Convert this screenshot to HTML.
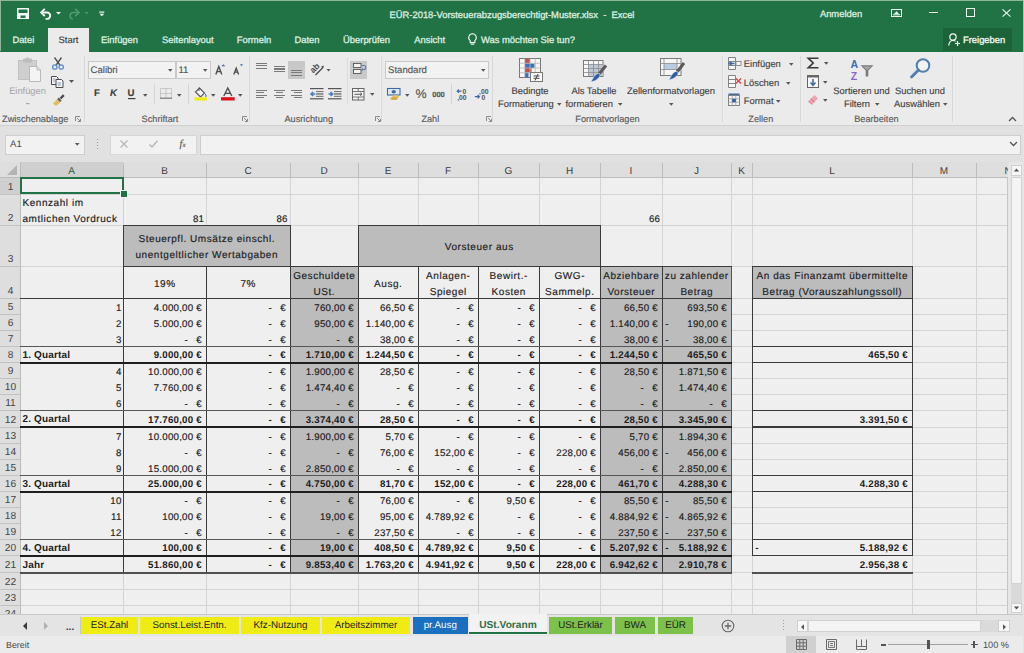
<!DOCTYPE html><html><head><meta charset="utf-8"><style>
*{margin:0;padding:0}
html,body{width:1024px;height:653px;overflow:hidden;background:#efefef}
body{position:relative;font-family:"Liberation Sans", sans-serif}
body>div{position:absolute}
.t{white-space:nowrap;overflow:visible;text-rendering:geometricPrecision}
.s{-webkit-text-stroke:0.16px currentColor}
.r{-webkit-text-stroke:0.15px currentColor}
</style></head><body><div style="left:0px;top:0px;width:1024px;height:51.5px;background:#217346;"></div>
<div style="left:0px;top:0px;width:1024px;height:1px;background:#8fb59a;"></div>
<div style="left:0px;top:0px;width:1px;height:51px;background:#8fb59a;"></div>
<div class="t" style="left:300.00px;top:8.55px;width:424.00px;height:11.28px;line-height:11.28px;font-size:9.4px;text-align:center;color:#dcefe0;-webkit-text-stroke:0.3px currentColor;">EÜR-2018-Vorsteuerabzugsberechtigt-Muster.xlsx&nbsp; - &nbsp;Excel</div>
<div class="t" style="left:812.00px;top:8.05px;width:58.00px;height:11.28px;line-height:11.28px;font-size:9.4px;text-align:center;color:#dcefe0;-webkit-text-stroke:0.3px currentColor;">Anmelden</div>
<div style="left:48px;top:28px;width:41px;height:24px;background:#ebebeb;"></div>
<div class="t r" style="left:48.00px;top:34.35px;width:41.00px;height:11.28px;line-height:11.28px;font-size:9.4px;text-align:center;color:#3a3a3a;">Start</div>
<div class="t" style="left:2.70px;top:34.35px;width:41.30px;height:11.28px;line-height:11.28px;font-size:9.4px;text-align:center;color:#dcefe0;-webkit-text-stroke:0.3px currentColor;">Datei</div>
<div class="t" style="left:91.00px;top:34.35px;width:57.00px;height:11.28px;line-height:11.28px;font-size:9.4px;text-align:center;color:#dcefe0;-webkit-text-stroke:0.3px currentColor;">Einfügen</div>
<div class="t" style="left:151.70px;top:34.35px;width:72.30px;height:11.28px;line-height:11.28px;font-size:9.4px;text-align:center;color:#dcefe0;-webkit-text-stroke:0.3px currentColor;">Seitenlayout</div>
<div class="t" style="left:227.00px;top:34.35px;width:54.00px;height:11.28px;line-height:11.28px;font-size:9.4px;text-align:center;color:#dcefe0;-webkit-text-stroke:0.3px currentColor;">Formeln</div>
<div class="t" style="left:285.00px;top:34.35px;width:44.00px;height:11.28px;line-height:11.28px;font-size:9.4px;text-align:center;color:#dcefe0;-webkit-text-stroke:0.3px currentColor;">Daten</div>
<div class="t" style="left:332.70px;top:34.35px;width:67.70px;height:11.28px;line-height:11.28px;font-size:9.4px;text-align:center;color:#dcefe0;-webkit-text-stroke:0.3px currentColor;">Überprüfen</div>
<div class="t" style="left:403.80px;top:34.35px;width:51.70px;height:11.28px;line-height:11.28px;font-size:9.4px;text-align:center;color:#dcefe0;-webkit-text-stroke:0.3px currentColor;">Ansicht</div>
<div class="t" style="left:481.00px;top:34.35px;width:119.00px;height:11.28px;line-height:11.28px;font-size:9.4px;text-align:left;color:#dcefe0;-webkit-text-stroke:0.3px currentColor;">Was möchten Sie tun?</div>
<div style="left:943px;top:28px;width:69px;height:23px;background:#1d6339;"></div>
<div class="t" style="left:963.00px;top:34.35px;width:47.00px;height:11.28px;line-height:11.28px;font-size:9.4px;text-align:left;color:#f4faf5;-webkit-text-stroke:0.3px currentColor;">Freigeben</div>
<div style="left:0px;top:51.5px;width:1024px;height:73.5px;background:#ebebeb;"></div>
<div style="left:84px;top:56px;width:1px;height:66px;background:#d8d8d8;"></div>
<div style="left:249px;top:56px;width:1px;height:66px;background:#d8d8d8;"></div>
<div style="left:381px;top:56px;width:1px;height:66px;background:#d8d8d8;"></div>
<div style="left:491.5px;top:56px;width:1px;height:66px;background:#d8d8d8;"></div>
<div style="left:722px;top:56px;width:1px;height:66px;background:#d8d8d8;"></div>
<div style="left:800px;top:56px;width:1px;height:66px;background:#d8d8d8;"></div>
<div style="left:952px;top:56px;width:1px;height:66px;background:#d8d8d8;"></div>
<div class="t r" style="left:-12.50px;top:113.74px;width:95.50px;height:11.04px;line-height:11.04px;font-size:9.2px;text-align:center;color:#5a5a5a;">Zwischenablage</div>
<div class="t r" style="left:126.00px;top:113.74px;width:68.00px;height:11.04px;line-height:11.04px;font-size:9.2px;text-align:center;color:#5a5a5a;">Schriftart</div>
<div class="t r" style="left:268.80px;top:113.74px;width:79.90px;height:11.04px;line-height:11.04px;font-size:9.2px;text-align:center;color:#5a5a5a;">Ausrichtung</div>
<div class="t r" style="left:406.70px;top:113.74px;width:47.30px;height:11.04px;line-height:11.04px;font-size:9.2px;text-align:center;color:#5a5a5a;">Zahl</div>
<div class="t r" style="left:560.50px;top:113.74px;width:94.00px;height:11.04px;line-height:11.04px;font-size:9.2px;text-align:center;color:#5a5a5a;">Formatvorlagen</div>
<div class="t r" style="left:733.70px;top:113.74px;width:54.30px;height:11.04px;line-height:11.04px;font-size:9.2px;text-align:center;color:#5a5a5a;">Zellen</div>
<div class="t r" style="left:839.90px;top:113.74px;width:73.10px;height:11.04px;line-height:11.04px;font-size:9.2px;text-align:center;color:#5a5a5a;">Bearbeiten</div>
<div style="left:0px;top:125px;width:1024px;height:37px;background:#e1e1e1;"></div>
<div style="left:0px;top:124.5px;width:1024px;height:1px;background:#d0d0d0;"></div>
<div style="left:4.5px;top:134.5px;width:80px;height:20px;background:#f2f2f2;border:1px solid #cdcdcd;box-sizing:border-box;"></div>
<div class="t" style="left:10.00px;top:139.37px;width:50.00px;height:11.52px;line-height:11.52px;font-size:9.6px;text-align:left;color:#4a4a4a;">A1</div>
<div style="left:109.5px;top:134.5px;width:87px;height:20px;background:#f2f2f2;border:1px solid #d6d6d6;box-sizing:border-box;"></div>
<div style="left:199.5px;top:134.5px;width:821px;height:20px;background:#f2f2f2;border:1px solid #cdcdcd;box-sizing:border-box;"></div>
<div style="left:0px;top:162px;width:1008px;height:452px;background:#efefef;"></div>
<div style="left:20px;top:162px;width:988px;height:15px;background:#dedede;"></div>
<div style="left:0px;top:162px;width:20px;height:452px;background:#dedede;"></div>
<div style="left:20px;top:162px;width:103px;height:15px;background:#cfcfcf;"></div>
<div style="left:0px;top:177px;width:20px;height:16.5px;background:#cfcfcf;"></div>
<div style="left:123px;top:177px;width:1px;height:437px;background:#d4d4d4;"></div>
<div style="left:123px;top:163px;width:1px;height:14px;background:#bdbdbd;"></div>
<div style="left:206px;top:177px;width:1px;height:437px;background:#d4d4d4;"></div>
<div style="left:206px;top:163px;width:1px;height:14px;background:#bdbdbd;"></div>
<div style="left:290px;top:177px;width:1px;height:437px;background:#d4d4d4;"></div>
<div style="left:290px;top:163px;width:1px;height:14px;background:#bdbdbd;"></div>
<div style="left:358px;top:177px;width:1px;height:437px;background:#d4d4d4;"></div>
<div style="left:358px;top:163px;width:1px;height:14px;background:#bdbdbd;"></div>
<div style="left:418px;top:177px;width:1px;height:437px;background:#d4d4d4;"></div>
<div style="left:418px;top:163px;width:1px;height:14px;background:#bdbdbd;"></div>
<div style="left:478px;top:177px;width:1px;height:437px;background:#d4d4d4;"></div>
<div style="left:478px;top:163px;width:1px;height:14px;background:#bdbdbd;"></div>
<div style="left:539px;top:177px;width:1px;height:437px;background:#d4d4d4;"></div>
<div style="left:539px;top:163px;width:1px;height:14px;background:#bdbdbd;"></div>
<div style="left:600px;top:177px;width:1px;height:437px;background:#d4d4d4;"></div>
<div style="left:600px;top:163px;width:1px;height:14px;background:#bdbdbd;"></div>
<div style="left:662px;top:177px;width:1px;height:437px;background:#d4d4d4;"></div>
<div style="left:662px;top:163px;width:1px;height:14px;background:#bdbdbd;"></div>
<div style="left:731px;top:177px;width:1px;height:437px;background:#d4d4d4;"></div>
<div style="left:731px;top:163px;width:1px;height:14px;background:#bdbdbd;"></div>
<div style="left:752px;top:177px;width:1px;height:437px;background:#d4d4d4;"></div>
<div style="left:752px;top:163px;width:1px;height:14px;background:#bdbdbd;"></div>
<div style="left:912px;top:177px;width:1px;height:437px;background:#d4d4d4;"></div>
<div style="left:912px;top:163px;width:1px;height:14px;background:#bdbdbd;"></div>
<div style="left:976px;top:177px;width:1px;height:437px;background:#d4d4d4;"></div>
<div style="left:976px;top:163px;width:1px;height:14px;background:#bdbdbd;"></div>
<div style="left:20px;top:193.5px;width:988px;height:1px;background:#d4d4d4;"></div>
<div style="left:0px;top:193.5px;width:20px;height:1px;background:#c2c2c2;"></div>
<div style="left:20px;top:225px;width:988px;height:1px;background:#d4d4d4;"></div>
<div style="left:0px;top:225px;width:20px;height:1px;background:#c2c2c2;"></div>
<div style="left:20px;top:266px;width:988px;height:1px;background:#d4d4d4;"></div>
<div style="left:0px;top:266px;width:20px;height:1px;background:#c2c2c2;"></div>
<div style="left:731px;top:298px;width:277px;height:1px;background:#d4d4d4;"></div>
<div style="left:0px;top:298px;width:20px;height:1px;background:#c2c2c2;"></div>
<div style="left:731px;top:314px;width:277px;height:1px;background:#d4d4d4;"></div>
<div style="left:0px;top:314px;width:20px;height:1px;background:#c2c2c2;"></div>
<div style="left:731px;top:330px;width:277px;height:1px;background:#d4d4d4;"></div>
<div style="left:0px;top:330px;width:20px;height:1px;background:#c2c2c2;"></div>
<div style="left:731px;top:346px;width:277px;height:1px;background:#d4d4d4;"></div>
<div style="left:0px;top:346px;width:20px;height:1px;background:#c2c2c2;"></div>
<div style="left:731px;top:362px;width:277px;height:1px;background:#d4d4d4;"></div>
<div style="left:0px;top:362px;width:20px;height:1px;background:#c2c2c2;"></div>
<div style="left:731px;top:378px;width:277px;height:1px;background:#d4d4d4;"></div>
<div style="left:0px;top:378px;width:20px;height:1px;background:#c2c2c2;"></div>
<div style="left:731px;top:394px;width:277px;height:1px;background:#d4d4d4;"></div>
<div style="left:0px;top:394px;width:20px;height:1px;background:#c2c2c2;"></div>
<div style="left:731px;top:410px;width:277px;height:1px;background:#d4d4d4;"></div>
<div style="left:0px;top:410px;width:20px;height:1px;background:#c2c2c2;"></div>
<div style="left:731px;top:426.5px;width:277px;height:1px;background:#d4d4d4;"></div>
<div style="left:0px;top:426.5px;width:20px;height:1px;background:#c2c2c2;"></div>
<div style="left:731px;top:443px;width:277px;height:1px;background:#d4d4d4;"></div>
<div style="left:0px;top:443px;width:20px;height:1px;background:#c2c2c2;"></div>
<div style="left:731px;top:459px;width:277px;height:1px;background:#d4d4d4;"></div>
<div style="left:0px;top:459px;width:20px;height:1px;background:#c2c2c2;"></div>
<div style="left:731px;top:475px;width:277px;height:1px;background:#d4d4d4;"></div>
<div style="left:0px;top:475px;width:20px;height:1px;background:#c2c2c2;"></div>
<div style="left:731px;top:491px;width:277px;height:1px;background:#d4d4d4;"></div>
<div style="left:0px;top:491px;width:20px;height:1px;background:#c2c2c2;"></div>
<div style="left:731px;top:507px;width:277px;height:1px;background:#d4d4d4;"></div>
<div style="left:0px;top:507px;width:20px;height:1px;background:#c2c2c2;"></div>
<div style="left:731px;top:523px;width:277px;height:1px;background:#d4d4d4;"></div>
<div style="left:0px;top:523px;width:20px;height:1px;background:#c2c2c2;"></div>
<div style="left:731px;top:539px;width:277px;height:1px;background:#d4d4d4;"></div>
<div style="left:0px;top:539px;width:20px;height:1px;background:#c2c2c2;"></div>
<div style="left:731px;top:555px;width:277px;height:1px;background:#d4d4d4;"></div>
<div style="left:0px;top:555px;width:20px;height:1px;background:#c2c2c2;"></div>
<div style="left:20px;top:572px;width:988px;height:1px;background:#d4d4d4;"></div>
<div style="left:0px;top:572px;width:20px;height:1px;background:#c2c2c2;"></div>
<div style="left:20px;top:589px;width:988px;height:1px;background:#d4d4d4;"></div>
<div style="left:0px;top:589px;width:20px;height:1px;background:#c2c2c2;"></div>
<div style="left:20px;top:605px;width:988px;height:1px;background:#d4d4d4;"></div>
<div style="left:0px;top:605px;width:20px;height:1px;background:#c2c2c2;"></div>
<div style="left:0px;top:177px;width:1008px;height:1px;background:#bcbcbc;"></div>
<div style="left:20px;top:162px;width:1px;height:452px;background:#bcbcbc;"></div>
<svg style="position:absolute;left:0;top:162px" width="20" height="15"><polygon points="17,3 17,13 7,13" fill="#b4b4b4"/></svg>
<div class="t" style="left:20.00px;top:165.69px;width:103.00px;height:12.0px;line-height:12.0px;font-size:10px;text-align:center;color:#2b5e3d;">A</div>
<div class="t" style="left:123.00px;top:165.69px;width:83.00px;height:12.0px;line-height:12.0px;font-size:10px;text-align:center;color:#3c3c3c;">B</div>
<div class="t" style="left:206.00px;top:165.69px;width:84.00px;height:12.0px;line-height:12.0px;font-size:10px;text-align:center;color:#3c3c3c;">C</div>
<div class="t" style="left:290.00px;top:165.69px;width:68.00px;height:12.0px;line-height:12.0px;font-size:10px;text-align:center;color:#3c3c3c;">D</div>
<div class="t" style="left:358.00px;top:165.69px;width:60.00px;height:12.0px;line-height:12.0px;font-size:10px;text-align:center;color:#3c3c3c;">E</div>
<div class="t" style="left:418.00px;top:165.69px;width:60.00px;height:12.0px;line-height:12.0px;font-size:10px;text-align:center;color:#3c3c3c;">F</div>
<div class="t" style="left:478.00px;top:165.69px;width:61.00px;height:12.0px;line-height:12.0px;font-size:10px;text-align:center;color:#3c3c3c;">G</div>
<div class="t" style="left:539.00px;top:165.69px;width:61.00px;height:12.0px;line-height:12.0px;font-size:10px;text-align:center;color:#3c3c3c;">H</div>
<div class="t" style="left:600.00px;top:165.69px;width:62.00px;height:12.0px;line-height:12.0px;font-size:10px;text-align:center;color:#3c3c3c;">I</div>
<div class="t" style="left:662.00px;top:165.69px;width:69.00px;height:12.0px;line-height:12.0px;font-size:10px;text-align:center;color:#3c3c3c;">J</div>
<div class="t" style="left:731.00px;top:165.69px;width:21.00px;height:12.0px;line-height:12.0px;font-size:10px;text-align:center;color:#3c3c3c;">K</div>
<div class="t" style="left:752.00px;top:165.69px;width:160.00px;height:12.0px;line-height:12.0px;font-size:10px;text-align:center;color:#3c3c3c;">L</div>
<div class="t" style="left:912.00px;top:165.69px;width:64.00px;height:12.0px;line-height:12.0px;font-size:10px;text-align:center;color:#3c3c3c;">M</div>
<div class="t" style="left:976.00px;top:165.69px;width:64.00px;height:12.0px;line-height:12.0px;font-size:10px;text-align:center;color:#3c3c3c;">N</div>
<div class="t" style="left:0.00px;top:181.61px;width:21.00px;height:12.24px;line-height:12.24px;font-size:10.2px;text-align:center;color:#444444;">1</div>
<div class="t" style="left:0.00px;top:213.11px;width:21.00px;height:12.24px;line-height:12.24px;font-size:10.2px;text-align:center;color:#444444;">2</div>
<div class="t" style="left:0.00px;top:254.11px;width:21.00px;height:12.24px;line-height:12.24px;font-size:10.2px;text-align:center;color:#444444;">3</div>
<div class="t" style="left:0.00px;top:286.11px;width:21.00px;height:12.24px;line-height:12.24px;font-size:10.2px;text-align:center;color:#444444;">4</div>
<div class="t" style="left:0.00px;top:302.11px;width:21.00px;height:12.24px;line-height:12.24px;font-size:10.2px;text-align:center;color:#444444;">5</div>
<div class="t" style="left:0.00px;top:318.11px;width:21.00px;height:12.24px;line-height:12.24px;font-size:10.2px;text-align:center;color:#444444;">6</div>
<div class="t" style="left:0.00px;top:334.11px;width:21.00px;height:12.24px;line-height:12.24px;font-size:10.2px;text-align:center;color:#444444;">7</div>
<div class="t" style="left:0.00px;top:350.11px;width:21.00px;height:12.24px;line-height:12.24px;font-size:10.2px;text-align:center;color:#444444;">8</div>
<div class="t" style="left:0.00px;top:366.11px;width:21.00px;height:12.24px;line-height:12.24px;font-size:10.2px;text-align:center;color:#444444;">9</div>
<div class="t" style="left:0.00px;top:382.11px;width:21.00px;height:12.24px;line-height:12.24px;font-size:10.2px;text-align:center;color:#444444;">10</div>
<div class="t" style="left:0.00px;top:398.11px;width:21.00px;height:12.24px;line-height:12.24px;font-size:10.2px;text-align:center;color:#444444;">11</div>
<div class="t" style="left:0.00px;top:414.61px;width:21.00px;height:12.24px;line-height:12.24px;font-size:10.2px;text-align:center;color:#444444;">12</div>
<div class="t" style="left:0.00px;top:431.11px;width:21.00px;height:12.24px;line-height:12.24px;font-size:10.2px;text-align:center;color:#444444;">13</div>
<div class="t" style="left:0.00px;top:447.11px;width:21.00px;height:12.24px;line-height:12.24px;font-size:10.2px;text-align:center;color:#444444;">14</div>
<div class="t" style="left:0.00px;top:463.11px;width:21.00px;height:12.24px;line-height:12.24px;font-size:10.2px;text-align:center;color:#444444;">15</div>
<div class="t" style="left:0.00px;top:479.11px;width:21.00px;height:12.24px;line-height:12.24px;font-size:10.2px;text-align:center;color:#444444;">16</div>
<div class="t" style="left:0.00px;top:495.11px;width:21.00px;height:12.24px;line-height:12.24px;font-size:10.2px;text-align:center;color:#444444;">17</div>
<div class="t" style="left:0.00px;top:511.11px;width:21.00px;height:12.24px;line-height:12.24px;font-size:10.2px;text-align:center;color:#444444;">18</div>
<div class="t" style="left:0.00px;top:527.11px;width:21.00px;height:12.24px;line-height:12.24px;font-size:10.2px;text-align:center;color:#444444;">19</div>
<div class="t" style="left:0.00px;top:543.11px;width:21.00px;height:12.24px;line-height:12.24px;font-size:10.2px;text-align:center;color:#444444;">20</div>
<div class="t" style="left:0.00px;top:560.11px;width:21.00px;height:12.24px;line-height:12.24px;font-size:10.2px;text-align:center;color:#444444;">21</div>
<div class="t" style="left:0.00px;top:577.11px;width:21.00px;height:12.24px;line-height:12.24px;font-size:10.2px;text-align:center;color:#444444;">22</div>
<div class="t" style="left:0.00px;top:593.11px;width:21.00px;height:12.24px;line-height:12.24px;font-size:10.2px;text-align:center;color:#444444;">23</div>
<div class="t" style="left:0.00px;top:609.11px;width:21.00px;height:12.24px;line-height:12.24px;font-size:10.2px;text-align:center;color:#444444;">24</div>
<div style="left:123px;top:225px;width:167px;height:41px;background:#bcbcbc;"></div>
<div style="left:358px;top:225px;width:242px;height:41px;background:#bcbcbc;"></div>
<div style="left:290px;top:266px;width:68px;height:306px;background:#bcbcbc;"></div>
<div style="left:600px;top:266px;width:131px;height:306px;background:#bcbcbc;"></div>
<div style="left:752px;top:266px;width:160px;height:32px;background:#bcbcbc;"></div>
<div style="left:291px;top:226px;width:67px;height:40px;background:#efefef;"></div>
<div style="left:123.0px;top:225px;width:1px;height:348px;background:#3a3a3a;"></div>
<div style="left:290.0px;top:225px;width:1px;height:348px;background:#3a3a3a;"></div>
<div style="left:358.0px;top:225px;width:1px;height:348px;background:#3a3a3a;"></div>
<div style="left:600.0px;top:225px;width:1px;height:348px;background:#3a3a3a;"></div>
<div style="left:206.0px;top:266px;width:1px;height:307px;background:#3a3a3a;"></div>
<div style="left:418.0px;top:266px;width:1px;height:307px;background:#3a3a3a;"></div>
<div style="left:478.0px;top:266px;width:1px;height:307px;background:#3a3a3a;"></div>
<div style="left:539.0px;top:266px;width:1px;height:307px;background:#3a3a3a;"></div>
<div style="left:662.0px;top:266px;width:1px;height:307px;background:#3a3a3a;"></div>
<div style="left:731.0px;top:266px;width:1px;height:307px;background:#555555;"></div>
<div style="left:752.0px;top:266px;width:1px;height:290px;background:#3a3a3a;"></div>
<div style="left:912.0px;top:266px;width:1px;height:290px;background:#3a3a3a;"></div>
<div style="left:123px;top:225.0px;width:168px;height:1px;background:#3a3a3a;"></div>
<div style="left:358px;top:225.0px;width:243px;height:1px;background:#3a3a3a;"></div>
<div style="left:123px;top:266.0px;width:609px;height:1px;background:#3a3a3a;"></div>
<div style="left:752px;top:266.0px;width:161px;height:1px;background:#3a3a3a;"></div>
<div style="left:20px;top:298.0px;width:712px;height:1px;background:#3a3a3a;"></div>
<div style="left:752px;top:298.0px;width:161px;height:1px;background:#3a3a3a;"></div>
<div style="left:20px;top:345.85px;width:712px;height:1.3px;background:#575757;"></div>
<div style="left:752px;top:346.0px;width:161px;height:1px;background:#3a3a3a;"></div>
<div style="left:20px;top:361.5px;width:712px;height:2px;background:#1e1e1e;"></div>
<div style="left:752px;top:361.9px;width:161px;height:1.2px;background:#3a3a3a;"></div>
<div style="left:20px;top:409.85px;width:712px;height:1.3px;background:#575757;"></div>
<div style="left:752px;top:410.0px;width:161px;height:1px;background:#3a3a3a;"></div>
<div style="left:20px;top:426.0px;width:712px;height:2px;background:#1e1e1e;"></div>
<div style="left:752px;top:426.4px;width:161px;height:1.2px;background:#3a3a3a;"></div>
<div style="left:20px;top:474.85px;width:712px;height:1.3px;background:#575757;"></div>
<div style="left:752px;top:475.0px;width:161px;height:1px;background:#3a3a3a;"></div>
<div style="left:20px;top:490.5px;width:712px;height:2px;background:#1e1e1e;"></div>
<div style="left:752px;top:490.9px;width:161px;height:1.2px;background:#3a3a3a;"></div>
<div style="left:20px;top:538.85px;width:712px;height:1.3px;background:#575757;"></div>
<div style="left:752px;top:539.0px;width:161px;height:1px;background:#3a3a3a;"></div>
<div style="left:20px;top:554.5px;width:712px;height:2px;background:#1e1e1e;"></div>
<div style="left:752px;top:554.9px;width:161px;height:1.2px;background:#3a3a3a;"></div>
<div style="left:20px;top:571.9px;width:712px;height:2.2px;background:#505050;"></div>
<div style="left:752px;top:571.9px;width:161px;height:2.2px;background:#505050;"></div>
<div style="left:19.5px;top:176.5px;width:104.5px;height:17.5px;background:transparent;border:2px solid #217346;box-sizing:border-box;"></div>
<div style="left:120.5px;top:190.5px;width:6px;height:6px;background:#217346;outline:1px solid #f4f4f4;"></div>
<div class="t s" style="left:22.50px;top:197.99px;width:117.50px;height:12.0px;line-height:12.0px;font-size:10.0px;text-align:left;color:#1c1c1c;letter-spacing:0.55px;">Kennzahl im</div>
<div class="t s" style="left:22.50px;top:213.59px;width:117.50px;height:12.0px;line-height:12.0px;font-size:10.0px;text-align:left;color:#1c1c1c;letter-spacing:0.55px;">amtlichen Vordruck</div>
<div class="t s" style="left:123.00px;top:214.17px;width:81.24px;height:11.64px;line-height:11.64px;font-size:9.7px;text-align:right;color:#1c1c1c;letter-spacing:0.24px;">81</div>
<div class="t s" style="left:206.00px;top:214.17px;width:81.74px;height:11.64px;line-height:11.64px;font-size:9.7px;text-align:right;color:#1c1c1c;letter-spacing:0.24px;">86</div>
<div class="t s" style="left:600.00px;top:214.17px;width:60.24px;height:11.64px;line-height:11.64px;font-size:9.7px;text-align:right;color:#1c1c1c;letter-spacing:0.24px;">66</div>
<div class="t s" style="left:123.28px;top:234.09px;width:167.00px;height:12.0px;line-height:12.0px;font-size:10.0px;text-align:center;color:#1c1c1c;letter-spacing:0.55px;">Steuerpfl. Umsätze einschl.</div>
<div class="t s" style="left:123.28px;top:250.00px;width:167.00px;height:12.0px;line-height:12.0px;font-size:10.0px;text-align:center;color:#1c1c1c;letter-spacing:0.55px;">unentgeltlicher Wertabgaben</div>
<div class="t s" style="left:358.27px;top:242.19px;width:242.00px;height:12.0px;line-height:12.0px;font-size:10.0px;text-align:center;color:#1c1c1c;letter-spacing:0.55px;">Vorsteuer aus</div>
<div class="t s" style="left:123.28px;top:279.00px;width:83.00px;height:12.0px;line-height:12.0px;font-size:10.0px;text-align:center;color:#1c1c1c;letter-spacing:0.55px;">19%</div>
<div class="t s" style="left:206.28px;top:279.00px;width:84.00px;height:12.0px;line-height:12.0px;font-size:10.0px;text-align:center;color:#1c1c1c;letter-spacing:0.55px;">7%</div>
<div class="t s" style="left:358.27px;top:279.00px;width:60.00px;height:12.0px;line-height:12.0px;font-size:10.0px;text-align:center;color:#1c1c1c;letter-spacing:0.55px;">Ausg.</div>
<div class="t s" style="left:280.27px;top:270.89px;width:88.00px;height:12.0px;line-height:12.0px;font-size:10.0px;text-align:center;color:#1c1c1c;letter-spacing:0.55px;">Geschuldete</div>
<div class="t s" style="left:280.27px;top:286.59px;width:88.00px;height:12.0px;line-height:12.0px;font-size:10.0px;text-align:center;color:#1c1c1c;letter-spacing:0.55px;">USt.</div>
<div class="t s" style="left:408.27px;top:270.89px;width:80.00px;height:12.0px;line-height:12.0px;font-size:10.0px;text-align:center;color:#1c1c1c;letter-spacing:0.55px;">Anlagen-</div>
<div class="t s" style="left:408.27px;top:286.59px;width:80.00px;height:12.0px;line-height:12.0px;font-size:10.0px;text-align:center;color:#1c1c1c;letter-spacing:0.55px;">Spiegel</div>
<div class="t s" style="left:468.27px;top:270.89px;width:81.00px;height:12.0px;line-height:12.0px;font-size:10.0px;text-align:center;color:#1c1c1c;letter-spacing:0.55px;">Bewirt.-</div>
<div class="t s" style="left:468.27px;top:286.59px;width:81.00px;height:12.0px;line-height:12.0px;font-size:10.0px;text-align:center;color:#1c1c1c;letter-spacing:0.55px;">Kosten</div>
<div class="t s" style="left:529.27px;top:270.89px;width:81.00px;height:12.0px;line-height:12.0px;font-size:10.0px;text-align:center;color:#1c1c1c;letter-spacing:0.55px;">GWG-</div>
<div class="t s" style="left:529.27px;top:286.59px;width:81.00px;height:12.0px;line-height:12.0px;font-size:10.0px;text-align:center;color:#1c1c1c;letter-spacing:0.55px;">Sammelp.</div>
<div class="t s" style="left:590.27px;top:270.89px;width:82.00px;height:12.0px;line-height:12.0px;font-size:10.0px;text-align:center;color:#1c1c1c;letter-spacing:0.55px;">Abziehbare</div>
<div class="t s" style="left:590.27px;top:286.59px;width:82.00px;height:12.0px;line-height:12.0px;font-size:10.0px;text-align:center;color:#1c1c1c;letter-spacing:0.55px;">Vorsteuer</div>
<div class="t s" style="left:652.27px;top:270.89px;width:89.00px;height:12.0px;line-height:12.0px;font-size:10.0px;text-align:center;color:#1c1c1c;letter-spacing:0.55px;">zu zahlender</div>
<div class="t s" style="left:652.27px;top:286.59px;width:89.00px;height:12.0px;line-height:12.0px;font-size:10.0px;text-align:center;color:#1c1c1c;letter-spacing:0.55px;">Betrag</div>
<div class="t s" style="left:742.27px;top:270.89px;width:180.00px;height:12.0px;line-height:12.0px;font-size:10.0px;text-align:center;color:#1c1c1c;letter-spacing:0.55px;">An das Finanzamt übermittelte</div>
<div class="t s" style="left:742.27px;top:286.59px;width:180.00px;height:12.0px;line-height:12.0px;font-size:10.0px;text-align:center;color:#1c1c1c;letter-spacing:0.55px;">Betrag (Vorauszahlungssoll)</div>
<div class="t s" style="left:20.00px;top:302.57px;width:101.54px;height:11.64px;line-height:11.64px;font-size:9.7px;text-align:right;color:#1c1c1c;letter-spacing:0.24px;">1</div>
<div class="t s" style="left:103.00px;top:302.57px;width:98.94px;height:11.64px;line-height:11.64px;font-size:9.7px;text-align:right;color:#1c1c1c;letter-spacing:0.24px;">4.000,00 €</div>
<div class="t s" style="left:260.00px;top:302.57px;width:25.70px;height:11.64px;line-height:11.64px;font-size:9.7px;text-align:right;color:#1c1c1c;">€</div>
<div class="t s" style="left:250.00px;top:302.57px;width:21.70px;height:11.64px;line-height:11.64px;font-size:9.7px;text-align:right;color:#1c1c1c;">-</div>
<div class="t s" style="left:270.00px;top:302.57px;width:83.94px;height:11.64px;line-height:11.64px;font-size:9.7px;text-align:right;color:#1c1c1c;letter-spacing:0.24px;">760,00 €</div>
<div class="t s" style="left:338.00px;top:302.57px;width:75.94px;height:11.64px;line-height:11.64px;font-size:9.7px;text-align:right;color:#1c1c1c;letter-spacing:0.24px;">66,50 €</div>
<div class="t s" style="left:448.00px;top:302.57px;width:25.70px;height:11.64px;line-height:11.64px;font-size:9.7px;text-align:right;color:#1c1c1c;">€</div>
<div class="t s" style="left:438.00px;top:302.57px;width:21.70px;height:11.64px;line-height:11.64px;font-size:9.7px;text-align:right;color:#1c1c1c;">-</div>
<div class="t s" style="left:509.00px;top:302.57px;width:25.70px;height:11.64px;line-height:11.64px;font-size:9.7px;text-align:right;color:#1c1c1c;">€</div>
<div class="t s" style="left:499.00px;top:302.57px;width:21.70px;height:11.64px;line-height:11.64px;font-size:9.7px;text-align:right;color:#1c1c1c;">-</div>
<div class="t s" style="left:570.00px;top:302.57px;width:25.70px;height:11.64px;line-height:11.64px;font-size:9.7px;text-align:right;color:#1c1c1c;">€</div>
<div class="t s" style="left:560.00px;top:302.57px;width:21.70px;height:11.64px;line-height:11.64px;font-size:9.7px;text-align:right;color:#1c1c1c;">-</div>
<div class="t s" style="left:580.00px;top:302.57px;width:77.94px;height:11.64px;line-height:11.64px;font-size:9.7px;text-align:right;color:#1c1c1c;letter-spacing:0.24px;">66,50 €</div>
<div class="t s" style="left:642.00px;top:302.57px;width:84.94px;height:11.64px;line-height:11.64px;font-size:9.7px;text-align:right;color:#1c1c1c;letter-spacing:0.24px;">693,50 €</div>
<div class="t s" style="left:20.00px;top:318.57px;width:101.54px;height:11.64px;line-height:11.64px;font-size:9.7px;text-align:right;color:#1c1c1c;letter-spacing:0.24px;">2</div>
<div class="t s" style="left:103.00px;top:318.57px;width:98.94px;height:11.64px;line-height:11.64px;font-size:9.7px;text-align:right;color:#1c1c1c;letter-spacing:0.24px;">5.000,00 €</div>
<div class="t s" style="left:260.00px;top:318.57px;width:25.70px;height:11.64px;line-height:11.64px;font-size:9.7px;text-align:right;color:#1c1c1c;">€</div>
<div class="t s" style="left:250.00px;top:318.57px;width:21.70px;height:11.64px;line-height:11.64px;font-size:9.7px;text-align:right;color:#1c1c1c;">-</div>
<div class="t s" style="left:270.00px;top:318.57px;width:83.94px;height:11.64px;line-height:11.64px;font-size:9.7px;text-align:right;color:#1c1c1c;letter-spacing:0.24px;">950,00 €</div>
<div class="t s" style="left:338.00px;top:318.57px;width:75.94px;height:11.64px;line-height:11.64px;font-size:9.7px;text-align:right;color:#1c1c1c;letter-spacing:0.24px;">1.140,00 €</div>
<div class="t s" style="left:448.00px;top:318.57px;width:25.70px;height:11.64px;line-height:11.64px;font-size:9.7px;text-align:right;color:#1c1c1c;">€</div>
<div class="t s" style="left:438.00px;top:318.57px;width:21.70px;height:11.64px;line-height:11.64px;font-size:9.7px;text-align:right;color:#1c1c1c;">-</div>
<div class="t s" style="left:509.00px;top:318.57px;width:25.70px;height:11.64px;line-height:11.64px;font-size:9.7px;text-align:right;color:#1c1c1c;">€</div>
<div class="t s" style="left:499.00px;top:318.57px;width:21.70px;height:11.64px;line-height:11.64px;font-size:9.7px;text-align:right;color:#1c1c1c;">-</div>
<div class="t s" style="left:570.00px;top:318.57px;width:25.70px;height:11.64px;line-height:11.64px;font-size:9.7px;text-align:right;color:#1c1c1c;">€</div>
<div class="t s" style="left:560.00px;top:318.57px;width:21.70px;height:11.64px;line-height:11.64px;font-size:9.7px;text-align:right;color:#1c1c1c;">-</div>
<div class="t s" style="left:580.00px;top:318.57px;width:77.94px;height:11.64px;line-height:11.64px;font-size:9.7px;text-align:right;color:#1c1c1c;letter-spacing:0.24px;">1.140,00 €</div>
<div class="t s" style="left:665.30px;top:318.57px;width:8.70px;height:11.64px;line-height:11.64px;font-size:9.7px;text-align:left;color:#1c1c1c;">-</div>
<div class="t s" style="left:642.00px;top:318.57px;width:84.94px;height:11.64px;line-height:11.64px;font-size:9.7px;text-align:right;color:#1c1c1c;letter-spacing:0.24px;">190,00 €</div>
<div class="t s" style="left:20.00px;top:334.57px;width:101.54px;height:11.64px;line-height:11.64px;font-size:9.7px;text-align:right;color:#1c1c1c;letter-spacing:0.24px;">3</div>
<div class="t s" style="left:176.00px;top:334.57px;width:25.70px;height:11.64px;line-height:11.64px;font-size:9.7px;text-align:right;color:#1c1c1c;">€</div>
<div class="t s" style="left:166.00px;top:334.57px;width:21.70px;height:11.64px;line-height:11.64px;font-size:9.7px;text-align:right;color:#1c1c1c;">-</div>
<div class="t s" style="left:260.00px;top:334.57px;width:25.70px;height:11.64px;line-height:11.64px;font-size:9.7px;text-align:right;color:#1c1c1c;">€</div>
<div class="t s" style="left:250.00px;top:334.57px;width:21.70px;height:11.64px;line-height:11.64px;font-size:9.7px;text-align:right;color:#1c1c1c;">-</div>
<div class="t s" style="left:328.00px;top:334.57px;width:25.70px;height:11.64px;line-height:11.64px;font-size:9.7px;text-align:right;color:#1c1c1c;">€</div>
<div class="t s" style="left:318.00px;top:334.57px;width:21.70px;height:11.64px;line-height:11.64px;font-size:9.7px;text-align:right;color:#1c1c1c;">-</div>
<div class="t s" style="left:338.00px;top:334.57px;width:75.94px;height:11.64px;line-height:11.64px;font-size:9.7px;text-align:right;color:#1c1c1c;letter-spacing:0.24px;">38,00 €</div>
<div class="t s" style="left:448.00px;top:334.57px;width:25.70px;height:11.64px;line-height:11.64px;font-size:9.7px;text-align:right;color:#1c1c1c;">€</div>
<div class="t s" style="left:438.00px;top:334.57px;width:21.70px;height:11.64px;line-height:11.64px;font-size:9.7px;text-align:right;color:#1c1c1c;">-</div>
<div class="t s" style="left:509.00px;top:334.57px;width:25.70px;height:11.64px;line-height:11.64px;font-size:9.7px;text-align:right;color:#1c1c1c;">€</div>
<div class="t s" style="left:499.00px;top:334.57px;width:21.70px;height:11.64px;line-height:11.64px;font-size:9.7px;text-align:right;color:#1c1c1c;">-</div>
<div class="t s" style="left:570.00px;top:334.57px;width:25.70px;height:11.64px;line-height:11.64px;font-size:9.7px;text-align:right;color:#1c1c1c;">€</div>
<div class="t s" style="left:560.00px;top:334.57px;width:21.70px;height:11.64px;line-height:11.64px;font-size:9.7px;text-align:right;color:#1c1c1c;">-</div>
<div class="t s" style="left:580.00px;top:334.57px;width:77.94px;height:11.64px;line-height:11.64px;font-size:9.7px;text-align:right;color:#1c1c1c;letter-spacing:0.24px;">38,00 €</div>
<div class="t s" style="left:665.30px;top:334.57px;width:8.70px;height:11.64px;line-height:11.64px;font-size:9.7px;text-align:left;color:#1c1c1c;">-</div>
<div class="t s" style="left:642.00px;top:334.57px;width:84.94px;height:11.64px;line-height:11.64px;font-size:9.7px;text-align:right;color:#1c1c1c;letter-spacing:0.24px;">38,00 €</div>
<div class="t" style="left:22.50px;top:349.79px;width:117.50px;height:12.0px;line-height:12.0px;font-size:10.0px;text-align:left;color:#1c1c1c;font-weight:bold;letter-spacing:0.15px;">1. Quartal</div>
<div class="t" style="left:103.00px;top:350.07px;width:98.94px;height:11.64px;line-height:11.64px;font-size:9.7px;text-align:right;color:#1c1c1c;font-weight:bold;letter-spacing:0.24px;">9.000,00 €</div>
<div class="t" style="left:260.00px;top:350.07px;width:25.70px;height:11.64px;line-height:11.64px;font-size:9.7px;text-align:right;color:#1c1c1c;font-weight:bold;">€</div>
<div class="t" style="left:250.00px;top:350.07px;width:21.70px;height:11.64px;line-height:11.64px;font-size:9.7px;text-align:right;color:#1c1c1c;font-weight:bold;">-</div>
<div class="t" style="left:270.00px;top:350.07px;width:83.94px;height:11.64px;line-height:11.64px;font-size:9.7px;text-align:right;color:#1c1c1c;font-weight:bold;letter-spacing:0.24px;">1.710,00 €</div>
<div class="t" style="left:338.00px;top:350.07px;width:75.94px;height:11.64px;line-height:11.64px;font-size:9.7px;text-align:right;color:#1c1c1c;font-weight:bold;letter-spacing:0.24px;">1.244,50 €</div>
<div class="t" style="left:448.00px;top:350.07px;width:25.70px;height:11.64px;line-height:11.64px;font-size:9.7px;text-align:right;color:#1c1c1c;font-weight:bold;">€</div>
<div class="t" style="left:438.00px;top:350.07px;width:21.70px;height:11.64px;line-height:11.64px;font-size:9.7px;text-align:right;color:#1c1c1c;font-weight:bold;">-</div>
<div class="t" style="left:509.00px;top:350.07px;width:25.70px;height:11.64px;line-height:11.64px;font-size:9.7px;text-align:right;color:#1c1c1c;font-weight:bold;">€</div>
<div class="t" style="left:499.00px;top:350.07px;width:21.70px;height:11.64px;line-height:11.64px;font-size:9.7px;text-align:right;color:#1c1c1c;font-weight:bold;">-</div>
<div class="t" style="left:570.00px;top:350.07px;width:25.70px;height:11.64px;line-height:11.64px;font-size:9.7px;text-align:right;color:#1c1c1c;font-weight:bold;">€</div>
<div class="t" style="left:560.00px;top:350.07px;width:21.70px;height:11.64px;line-height:11.64px;font-size:9.7px;text-align:right;color:#1c1c1c;font-weight:bold;">-</div>
<div class="t" style="left:580.00px;top:350.07px;width:77.94px;height:11.64px;line-height:11.64px;font-size:9.7px;text-align:right;color:#1c1c1c;font-weight:bold;letter-spacing:0.24px;">1.244,50 €</div>
<div class="t" style="left:642.00px;top:350.07px;width:84.94px;height:11.64px;line-height:11.64px;font-size:9.7px;text-align:right;color:#1c1c1c;font-weight:bold;letter-spacing:0.24px;">465,50 €</div>
<div class="t" style="left:732.00px;top:350.07px;width:175.94px;height:11.64px;line-height:11.64px;font-size:9.7px;text-align:right;color:#1c1c1c;font-weight:bold;letter-spacing:0.24px;">465,50 €</div>
<div class="t s" style="left:20.00px;top:366.57px;width:101.54px;height:11.64px;line-height:11.64px;font-size:9.7px;text-align:right;color:#1c1c1c;letter-spacing:0.24px;">4</div>
<div class="t s" style="left:103.00px;top:366.57px;width:98.94px;height:11.64px;line-height:11.64px;font-size:9.7px;text-align:right;color:#1c1c1c;letter-spacing:0.24px;">10.000,00 €</div>
<div class="t s" style="left:260.00px;top:366.57px;width:25.70px;height:11.64px;line-height:11.64px;font-size:9.7px;text-align:right;color:#1c1c1c;">€</div>
<div class="t s" style="left:250.00px;top:366.57px;width:21.70px;height:11.64px;line-height:11.64px;font-size:9.7px;text-align:right;color:#1c1c1c;">-</div>
<div class="t s" style="left:270.00px;top:366.57px;width:83.94px;height:11.64px;line-height:11.64px;font-size:9.7px;text-align:right;color:#1c1c1c;letter-spacing:0.24px;">1.900,00 €</div>
<div class="t s" style="left:338.00px;top:366.57px;width:75.94px;height:11.64px;line-height:11.64px;font-size:9.7px;text-align:right;color:#1c1c1c;letter-spacing:0.24px;">28,50 €</div>
<div class="t s" style="left:448.00px;top:366.57px;width:25.70px;height:11.64px;line-height:11.64px;font-size:9.7px;text-align:right;color:#1c1c1c;">€</div>
<div class="t s" style="left:438.00px;top:366.57px;width:21.70px;height:11.64px;line-height:11.64px;font-size:9.7px;text-align:right;color:#1c1c1c;">-</div>
<div class="t s" style="left:509.00px;top:366.57px;width:25.70px;height:11.64px;line-height:11.64px;font-size:9.7px;text-align:right;color:#1c1c1c;">€</div>
<div class="t s" style="left:499.00px;top:366.57px;width:21.70px;height:11.64px;line-height:11.64px;font-size:9.7px;text-align:right;color:#1c1c1c;">-</div>
<div class="t s" style="left:570.00px;top:366.57px;width:25.70px;height:11.64px;line-height:11.64px;font-size:9.7px;text-align:right;color:#1c1c1c;">€</div>
<div class="t s" style="left:560.00px;top:366.57px;width:21.70px;height:11.64px;line-height:11.64px;font-size:9.7px;text-align:right;color:#1c1c1c;">-</div>
<div class="t s" style="left:580.00px;top:366.57px;width:77.94px;height:11.64px;line-height:11.64px;font-size:9.7px;text-align:right;color:#1c1c1c;letter-spacing:0.24px;">28,50 €</div>
<div class="t s" style="left:642.00px;top:366.57px;width:84.94px;height:11.64px;line-height:11.64px;font-size:9.7px;text-align:right;color:#1c1c1c;letter-spacing:0.24px;">1.871,50 €</div>
<div class="t s" style="left:20.00px;top:382.57px;width:101.54px;height:11.64px;line-height:11.64px;font-size:9.7px;text-align:right;color:#1c1c1c;letter-spacing:0.24px;">5</div>
<div class="t s" style="left:103.00px;top:382.57px;width:98.94px;height:11.64px;line-height:11.64px;font-size:9.7px;text-align:right;color:#1c1c1c;letter-spacing:0.24px;">7.760,00 €</div>
<div class="t s" style="left:260.00px;top:382.57px;width:25.70px;height:11.64px;line-height:11.64px;font-size:9.7px;text-align:right;color:#1c1c1c;">€</div>
<div class="t s" style="left:250.00px;top:382.57px;width:21.70px;height:11.64px;line-height:11.64px;font-size:9.7px;text-align:right;color:#1c1c1c;">-</div>
<div class="t s" style="left:270.00px;top:382.57px;width:83.94px;height:11.64px;line-height:11.64px;font-size:9.7px;text-align:right;color:#1c1c1c;letter-spacing:0.24px;">1.474,40 €</div>
<div class="t s" style="left:388.00px;top:382.57px;width:25.70px;height:11.64px;line-height:11.64px;font-size:9.7px;text-align:right;color:#1c1c1c;">€</div>
<div class="t s" style="left:378.00px;top:382.57px;width:21.70px;height:11.64px;line-height:11.64px;font-size:9.7px;text-align:right;color:#1c1c1c;">-</div>
<div class="t s" style="left:448.00px;top:382.57px;width:25.70px;height:11.64px;line-height:11.64px;font-size:9.7px;text-align:right;color:#1c1c1c;">€</div>
<div class="t s" style="left:438.00px;top:382.57px;width:21.70px;height:11.64px;line-height:11.64px;font-size:9.7px;text-align:right;color:#1c1c1c;">-</div>
<div class="t s" style="left:509.00px;top:382.57px;width:25.70px;height:11.64px;line-height:11.64px;font-size:9.7px;text-align:right;color:#1c1c1c;">€</div>
<div class="t s" style="left:499.00px;top:382.57px;width:21.70px;height:11.64px;line-height:11.64px;font-size:9.7px;text-align:right;color:#1c1c1c;">-</div>
<div class="t s" style="left:570.00px;top:382.57px;width:25.70px;height:11.64px;line-height:11.64px;font-size:9.7px;text-align:right;color:#1c1c1c;">€</div>
<div class="t s" style="left:560.00px;top:382.57px;width:21.70px;height:11.64px;line-height:11.64px;font-size:9.7px;text-align:right;color:#1c1c1c;">-</div>
<div class="t s" style="left:632.00px;top:382.57px;width:25.70px;height:11.64px;line-height:11.64px;font-size:9.7px;text-align:right;color:#1c1c1c;">€</div>
<div class="t s" style="left:622.00px;top:382.57px;width:21.70px;height:11.64px;line-height:11.64px;font-size:9.7px;text-align:right;color:#1c1c1c;">-</div>
<div class="t s" style="left:642.00px;top:382.57px;width:84.94px;height:11.64px;line-height:11.64px;font-size:9.7px;text-align:right;color:#1c1c1c;letter-spacing:0.24px;">1.474,40 €</div>
<div class="t s" style="left:20.00px;top:398.57px;width:101.54px;height:11.64px;line-height:11.64px;font-size:9.7px;text-align:right;color:#1c1c1c;letter-spacing:0.24px;">6</div>
<div class="t s" style="left:176.00px;top:398.57px;width:25.70px;height:11.64px;line-height:11.64px;font-size:9.7px;text-align:right;color:#1c1c1c;">€</div>
<div class="t s" style="left:166.00px;top:398.57px;width:21.70px;height:11.64px;line-height:11.64px;font-size:9.7px;text-align:right;color:#1c1c1c;">-</div>
<div class="t s" style="left:260.00px;top:398.57px;width:25.70px;height:11.64px;line-height:11.64px;font-size:9.7px;text-align:right;color:#1c1c1c;">€</div>
<div class="t s" style="left:250.00px;top:398.57px;width:21.70px;height:11.64px;line-height:11.64px;font-size:9.7px;text-align:right;color:#1c1c1c;">-</div>
<div class="t s" style="left:328.00px;top:398.57px;width:25.70px;height:11.64px;line-height:11.64px;font-size:9.7px;text-align:right;color:#1c1c1c;">€</div>
<div class="t s" style="left:318.00px;top:398.57px;width:21.70px;height:11.64px;line-height:11.64px;font-size:9.7px;text-align:right;color:#1c1c1c;">-</div>
<div class="t s" style="left:388.00px;top:398.57px;width:25.70px;height:11.64px;line-height:11.64px;font-size:9.7px;text-align:right;color:#1c1c1c;">€</div>
<div class="t s" style="left:378.00px;top:398.57px;width:21.70px;height:11.64px;line-height:11.64px;font-size:9.7px;text-align:right;color:#1c1c1c;">-</div>
<div class="t s" style="left:448.00px;top:398.57px;width:25.70px;height:11.64px;line-height:11.64px;font-size:9.7px;text-align:right;color:#1c1c1c;">€</div>
<div class="t s" style="left:438.00px;top:398.57px;width:21.70px;height:11.64px;line-height:11.64px;font-size:9.7px;text-align:right;color:#1c1c1c;">-</div>
<div class="t s" style="left:509.00px;top:398.57px;width:25.70px;height:11.64px;line-height:11.64px;font-size:9.7px;text-align:right;color:#1c1c1c;">€</div>
<div class="t s" style="left:499.00px;top:398.57px;width:21.70px;height:11.64px;line-height:11.64px;font-size:9.7px;text-align:right;color:#1c1c1c;">-</div>
<div class="t s" style="left:570.00px;top:398.57px;width:25.70px;height:11.64px;line-height:11.64px;font-size:9.7px;text-align:right;color:#1c1c1c;">€</div>
<div class="t s" style="left:560.00px;top:398.57px;width:21.70px;height:11.64px;line-height:11.64px;font-size:9.7px;text-align:right;color:#1c1c1c;">-</div>
<div class="t s" style="left:632.00px;top:398.57px;width:25.70px;height:11.64px;line-height:11.64px;font-size:9.7px;text-align:right;color:#1c1c1c;">€</div>
<div class="t s" style="left:622.00px;top:398.57px;width:21.70px;height:11.64px;line-height:11.64px;font-size:9.7px;text-align:right;color:#1c1c1c;">-</div>
<div class="t s" style="left:701.00px;top:398.57px;width:25.70px;height:11.64px;line-height:11.64px;font-size:9.7px;text-align:right;color:#1c1c1c;">€</div>
<div class="t s" style="left:691.00px;top:398.57px;width:21.70px;height:11.64px;line-height:11.64px;font-size:9.7px;text-align:right;color:#1c1c1c;">-</div>
<div class="t" style="left:22.50px;top:414.29px;width:117.50px;height:12.0px;line-height:12.0px;font-size:10.0px;text-align:left;color:#1c1c1c;font-weight:bold;letter-spacing:0.15px;">2. Quartal</div>
<div class="t" style="left:103.00px;top:414.57px;width:98.94px;height:11.64px;line-height:11.64px;font-size:9.7px;text-align:right;color:#1c1c1c;font-weight:bold;letter-spacing:0.24px;">17.760,00 €</div>
<div class="t" style="left:260.00px;top:414.57px;width:25.70px;height:11.64px;line-height:11.64px;font-size:9.7px;text-align:right;color:#1c1c1c;font-weight:bold;">€</div>
<div class="t" style="left:250.00px;top:414.57px;width:21.70px;height:11.64px;line-height:11.64px;font-size:9.7px;text-align:right;color:#1c1c1c;font-weight:bold;">-</div>
<div class="t" style="left:270.00px;top:414.57px;width:83.94px;height:11.64px;line-height:11.64px;font-size:9.7px;text-align:right;color:#1c1c1c;font-weight:bold;letter-spacing:0.24px;">3.374,40 €</div>
<div class="t" style="left:338.00px;top:414.57px;width:75.94px;height:11.64px;line-height:11.64px;font-size:9.7px;text-align:right;color:#1c1c1c;font-weight:bold;letter-spacing:0.24px;">28,50 €</div>
<div class="t" style="left:448.00px;top:414.57px;width:25.70px;height:11.64px;line-height:11.64px;font-size:9.7px;text-align:right;color:#1c1c1c;font-weight:bold;">€</div>
<div class="t" style="left:438.00px;top:414.57px;width:21.70px;height:11.64px;line-height:11.64px;font-size:9.7px;text-align:right;color:#1c1c1c;font-weight:bold;">-</div>
<div class="t" style="left:509.00px;top:414.57px;width:25.70px;height:11.64px;line-height:11.64px;font-size:9.7px;text-align:right;color:#1c1c1c;font-weight:bold;">€</div>
<div class="t" style="left:499.00px;top:414.57px;width:21.70px;height:11.64px;line-height:11.64px;font-size:9.7px;text-align:right;color:#1c1c1c;font-weight:bold;">-</div>
<div class="t" style="left:570.00px;top:414.57px;width:25.70px;height:11.64px;line-height:11.64px;font-size:9.7px;text-align:right;color:#1c1c1c;font-weight:bold;">€</div>
<div class="t" style="left:560.00px;top:414.57px;width:21.70px;height:11.64px;line-height:11.64px;font-size:9.7px;text-align:right;color:#1c1c1c;font-weight:bold;">-</div>
<div class="t" style="left:580.00px;top:414.57px;width:77.94px;height:11.64px;line-height:11.64px;font-size:9.7px;text-align:right;color:#1c1c1c;font-weight:bold;letter-spacing:0.24px;">28,50 €</div>
<div class="t" style="left:642.00px;top:414.57px;width:84.94px;height:11.64px;line-height:11.64px;font-size:9.7px;text-align:right;color:#1c1c1c;font-weight:bold;letter-spacing:0.24px;">3.345,90 €</div>
<div class="t" style="left:732.00px;top:414.57px;width:175.94px;height:11.64px;line-height:11.64px;font-size:9.7px;text-align:right;color:#1c1c1c;font-weight:bold;letter-spacing:0.24px;">3.391,50 €</div>
<div class="t s" style="left:20.00px;top:431.57px;width:101.54px;height:11.64px;line-height:11.64px;font-size:9.7px;text-align:right;color:#1c1c1c;letter-spacing:0.24px;">7</div>
<div class="t s" style="left:103.00px;top:431.57px;width:98.94px;height:11.64px;line-height:11.64px;font-size:9.7px;text-align:right;color:#1c1c1c;letter-spacing:0.24px;">10.000,00 €</div>
<div class="t s" style="left:260.00px;top:431.57px;width:25.70px;height:11.64px;line-height:11.64px;font-size:9.7px;text-align:right;color:#1c1c1c;">€</div>
<div class="t s" style="left:250.00px;top:431.57px;width:21.70px;height:11.64px;line-height:11.64px;font-size:9.7px;text-align:right;color:#1c1c1c;">-</div>
<div class="t s" style="left:270.00px;top:431.57px;width:83.94px;height:11.64px;line-height:11.64px;font-size:9.7px;text-align:right;color:#1c1c1c;letter-spacing:0.24px;">1.900,00 €</div>
<div class="t s" style="left:338.00px;top:431.57px;width:75.94px;height:11.64px;line-height:11.64px;font-size:9.7px;text-align:right;color:#1c1c1c;letter-spacing:0.24px;">5,70 €</div>
<div class="t s" style="left:448.00px;top:431.57px;width:25.70px;height:11.64px;line-height:11.64px;font-size:9.7px;text-align:right;color:#1c1c1c;">€</div>
<div class="t s" style="left:438.00px;top:431.57px;width:21.70px;height:11.64px;line-height:11.64px;font-size:9.7px;text-align:right;color:#1c1c1c;">-</div>
<div class="t s" style="left:509.00px;top:431.57px;width:25.70px;height:11.64px;line-height:11.64px;font-size:9.7px;text-align:right;color:#1c1c1c;">€</div>
<div class="t s" style="left:499.00px;top:431.57px;width:21.70px;height:11.64px;line-height:11.64px;font-size:9.7px;text-align:right;color:#1c1c1c;">-</div>
<div class="t s" style="left:570.00px;top:431.57px;width:25.70px;height:11.64px;line-height:11.64px;font-size:9.7px;text-align:right;color:#1c1c1c;">€</div>
<div class="t s" style="left:560.00px;top:431.57px;width:21.70px;height:11.64px;line-height:11.64px;font-size:9.7px;text-align:right;color:#1c1c1c;">-</div>
<div class="t s" style="left:580.00px;top:431.57px;width:77.94px;height:11.64px;line-height:11.64px;font-size:9.7px;text-align:right;color:#1c1c1c;letter-spacing:0.24px;">5,70 €</div>
<div class="t s" style="left:642.00px;top:431.57px;width:84.94px;height:11.64px;line-height:11.64px;font-size:9.7px;text-align:right;color:#1c1c1c;letter-spacing:0.24px;">1.894,30 €</div>
<div class="t s" style="left:20.00px;top:447.57px;width:101.54px;height:11.64px;line-height:11.64px;font-size:9.7px;text-align:right;color:#1c1c1c;letter-spacing:0.24px;">8</div>
<div class="t s" style="left:176.00px;top:447.57px;width:25.70px;height:11.64px;line-height:11.64px;font-size:9.7px;text-align:right;color:#1c1c1c;">€</div>
<div class="t s" style="left:166.00px;top:447.57px;width:21.70px;height:11.64px;line-height:11.64px;font-size:9.7px;text-align:right;color:#1c1c1c;">-</div>
<div class="t s" style="left:260.00px;top:447.57px;width:25.70px;height:11.64px;line-height:11.64px;font-size:9.7px;text-align:right;color:#1c1c1c;">€</div>
<div class="t s" style="left:250.00px;top:447.57px;width:21.70px;height:11.64px;line-height:11.64px;font-size:9.7px;text-align:right;color:#1c1c1c;">-</div>
<div class="t s" style="left:328.00px;top:447.57px;width:25.70px;height:11.64px;line-height:11.64px;font-size:9.7px;text-align:right;color:#1c1c1c;">€</div>
<div class="t s" style="left:318.00px;top:447.57px;width:21.70px;height:11.64px;line-height:11.64px;font-size:9.7px;text-align:right;color:#1c1c1c;">-</div>
<div class="t s" style="left:338.00px;top:447.57px;width:75.94px;height:11.64px;line-height:11.64px;font-size:9.7px;text-align:right;color:#1c1c1c;letter-spacing:0.24px;">76,00 €</div>
<div class="t s" style="left:398.00px;top:447.57px;width:75.94px;height:11.64px;line-height:11.64px;font-size:9.7px;text-align:right;color:#1c1c1c;letter-spacing:0.24px;">152,00 €</div>
<div class="t s" style="left:509.00px;top:447.57px;width:25.70px;height:11.64px;line-height:11.64px;font-size:9.7px;text-align:right;color:#1c1c1c;">€</div>
<div class="t s" style="left:499.00px;top:447.57px;width:21.70px;height:11.64px;line-height:11.64px;font-size:9.7px;text-align:right;color:#1c1c1c;">-</div>
<div class="t s" style="left:519.00px;top:447.57px;width:76.94px;height:11.64px;line-height:11.64px;font-size:9.7px;text-align:right;color:#1c1c1c;letter-spacing:0.24px;">228,00 €</div>
<div class="t s" style="left:580.00px;top:447.57px;width:77.94px;height:11.64px;line-height:11.64px;font-size:9.7px;text-align:right;color:#1c1c1c;letter-spacing:0.24px;">456,00 €</div>
<div class="t s" style="left:665.30px;top:447.57px;width:8.70px;height:11.64px;line-height:11.64px;font-size:9.7px;text-align:left;color:#1c1c1c;">-</div>
<div class="t s" style="left:642.00px;top:447.57px;width:84.94px;height:11.64px;line-height:11.64px;font-size:9.7px;text-align:right;color:#1c1c1c;letter-spacing:0.24px;">456,00 €</div>
<div class="t s" style="left:20.00px;top:463.57px;width:101.54px;height:11.64px;line-height:11.64px;font-size:9.7px;text-align:right;color:#1c1c1c;letter-spacing:0.24px;">9</div>
<div class="t s" style="left:103.00px;top:463.57px;width:98.94px;height:11.64px;line-height:11.64px;font-size:9.7px;text-align:right;color:#1c1c1c;letter-spacing:0.24px;">15.000,00 €</div>
<div class="t s" style="left:260.00px;top:463.57px;width:25.70px;height:11.64px;line-height:11.64px;font-size:9.7px;text-align:right;color:#1c1c1c;">€</div>
<div class="t s" style="left:250.00px;top:463.57px;width:21.70px;height:11.64px;line-height:11.64px;font-size:9.7px;text-align:right;color:#1c1c1c;">-</div>
<div class="t s" style="left:270.00px;top:463.57px;width:83.94px;height:11.64px;line-height:11.64px;font-size:9.7px;text-align:right;color:#1c1c1c;letter-spacing:0.24px;">2.850,00 €</div>
<div class="t s" style="left:388.00px;top:463.57px;width:25.70px;height:11.64px;line-height:11.64px;font-size:9.7px;text-align:right;color:#1c1c1c;">€</div>
<div class="t s" style="left:378.00px;top:463.57px;width:21.70px;height:11.64px;line-height:11.64px;font-size:9.7px;text-align:right;color:#1c1c1c;">-</div>
<div class="t s" style="left:448.00px;top:463.57px;width:25.70px;height:11.64px;line-height:11.64px;font-size:9.7px;text-align:right;color:#1c1c1c;">€</div>
<div class="t s" style="left:438.00px;top:463.57px;width:21.70px;height:11.64px;line-height:11.64px;font-size:9.7px;text-align:right;color:#1c1c1c;">-</div>
<div class="t s" style="left:509.00px;top:463.57px;width:25.70px;height:11.64px;line-height:11.64px;font-size:9.7px;text-align:right;color:#1c1c1c;">€</div>
<div class="t s" style="left:499.00px;top:463.57px;width:21.70px;height:11.64px;line-height:11.64px;font-size:9.7px;text-align:right;color:#1c1c1c;">-</div>
<div class="t s" style="left:570.00px;top:463.57px;width:25.70px;height:11.64px;line-height:11.64px;font-size:9.7px;text-align:right;color:#1c1c1c;">€</div>
<div class="t s" style="left:560.00px;top:463.57px;width:21.70px;height:11.64px;line-height:11.64px;font-size:9.7px;text-align:right;color:#1c1c1c;">-</div>
<div class="t s" style="left:632.00px;top:463.57px;width:25.70px;height:11.64px;line-height:11.64px;font-size:9.7px;text-align:right;color:#1c1c1c;">€</div>
<div class="t s" style="left:622.00px;top:463.57px;width:21.70px;height:11.64px;line-height:11.64px;font-size:9.7px;text-align:right;color:#1c1c1c;">-</div>
<div class="t s" style="left:642.00px;top:463.57px;width:84.94px;height:11.64px;line-height:11.64px;font-size:9.7px;text-align:right;color:#1c1c1c;letter-spacing:0.24px;">2.850,00 €</div>
<div class="t" style="left:22.50px;top:478.79px;width:117.50px;height:12.0px;line-height:12.0px;font-size:10.0px;text-align:left;color:#1c1c1c;font-weight:bold;letter-spacing:0.15px;">3. Quartal</div>
<div class="t" style="left:103.00px;top:479.07px;width:98.94px;height:11.64px;line-height:11.64px;font-size:9.7px;text-align:right;color:#1c1c1c;font-weight:bold;letter-spacing:0.24px;">25.000,00 €</div>
<div class="t" style="left:260.00px;top:479.07px;width:25.70px;height:11.64px;line-height:11.64px;font-size:9.7px;text-align:right;color:#1c1c1c;font-weight:bold;">€</div>
<div class="t" style="left:250.00px;top:479.07px;width:21.70px;height:11.64px;line-height:11.64px;font-size:9.7px;text-align:right;color:#1c1c1c;font-weight:bold;">-</div>
<div class="t" style="left:270.00px;top:479.07px;width:83.94px;height:11.64px;line-height:11.64px;font-size:9.7px;text-align:right;color:#1c1c1c;font-weight:bold;letter-spacing:0.24px;">4.750,00 €</div>
<div class="t" style="left:338.00px;top:479.07px;width:75.94px;height:11.64px;line-height:11.64px;font-size:9.7px;text-align:right;color:#1c1c1c;font-weight:bold;letter-spacing:0.24px;">81,70 €</div>
<div class="t" style="left:398.00px;top:479.07px;width:75.94px;height:11.64px;line-height:11.64px;font-size:9.7px;text-align:right;color:#1c1c1c;font-weight:bold;letter-spacing:0.24px;">152,00 €</div>
<div class="t" style="left:509.00px;top:479.07px;width:25.70px;height:11.64px;line-height:11.64px;font-size:9.7px;text-align:right;color:#1c1c1c;font-weight:bold;">€</div>
<div class="t" style="left:499.00px;top:479.07px;width:21.70px;height:11.64px;line-height:11.64px;font-size:9.7px;text-align:right;color:#1c1c1c;font-weight:bold;">-</div>
<div class="t" style="left:519.00px;top:479.07px;width:76.94px;height:11.64px;line-height:11.64px;font-size:9.7px;text-align:right;color:#1c1c1c;font-weight:bold;letter-spacing:0.24px;">228,00 €</div>
<div class="t" style="left:580.00px;top:479.07px;width:77.94px;height:11.64px;line-height:11.64px;font-size:9.7px;text-align:right;color:#1c1c1c;font-weight:bold;letter-spacing:0.24px;">461,70 €</div>
<div class="t" style="left:642.00px;top:479.07px;width:84.94px;height:11.64px;line-height:11.64px;font-size:9.7px;text-align:right;color:#1c1c1c;font-weight:bold;letter-spacing:0.24px;">4.288,30 €</div>
<div class="t" style="left:732.00px;top:479.07px;width:175.94px;height:11.64px;line-height:11.64px;font-size:9.7px;text-align:right;color:#1c1c1c;font-weight:bold;letter-spacing:0.24px;">4.288,30 €</div>
<div class="t s" style="left:20.00px;top:495.57px;width:101.54px;height:11.64px;line-height:11.64px;font-size:9.7px;text-align:right;color:#1c1c1c;letter-spacing:0.24px;">10</div>
<div class="t s" style="left:176.00px;top:495.57px;width:25.70px;height:11.64px;line-height:11.64px;font-size:9.7px;text-align:right;color:#1c1c1c;">€</div>
<div class="t s" style="left:166.00px;top:495.57px;width:21.70px;height:11.64px;line-height:11.64px;font-size:9.7px;text-align:right;color:#1c1c1c;">-</div>
<div class="t s" style="left:260.00px;top:495.57px;width:25.70px;height:11.64px;line-height:11.64px;font-size:9.7px;text-align:right;color:#1c1c1c;">€</div>
<div class="t s" style="left:250.00px;top:495.57px;width:21.70px;height:11.64px;line-height:11.64px;font-size:9.7px;text-align:right;color:#1c1c1c;">-</div>
<div class="t s" style="left:328.00px;top:495.57px;width:25.70px;height:11.64px;line-height:11.64px;font-size:9.7px;text-align:right;color:#1c1c1c;">€</div>
<div class="t s" style="left:318.00px;top:495.57px;width:21.70px;height:11.64px;line-height:11.64px;font-size:9.7px;text-align:right;color:#1c1c1c;">-</div>
<div class="t s" style="left:338.00px;top:495.57px;width:75.94px;height:11.64px;line-height:11.64px;font-size:9.7px;text-align:right;color:#1c1c1c;letter-spacing:0.24px;">76,00 €</div>
<div class="t s" style="left:448.00px;top:495.57px;width:25.70px;height:11.64px;line-height:11.64px;font-size:9.7px;text-align:right;color:#1c1c1c;">€</div>
<div class="t s" style="left:438.00px;top:495.57px;width:21.70px;height:11.64px;line-height:11.64px;font-size:9.7px;text-align:right;color:#1c1c1c;">-</div>
<div class="t s" style="left:458.00px;top:495.57px;width:76.94px;height:11.64px;line-height:11.64px;font-size:9.7px;text-align:right;color:#1c1c1c;letter-spacing:0.24px;">9,50 €</div>
<div class="t s" style="left:570.00px;top:495.57px;width:25.70px;height:11.64px;line-height:11.64px;font-size:9.7px;text-align:right;color:#1c1c1c;">€</div>
<div class="t s" style="left:560.00px;top:495.57px;width:21.70px;height:11.64px;line-height:11.64px;font-size:9.7px;text-align:right;color:#1c1c1c;">-</div>
<div class="t s" style="left:580.00px;top:495.57px;width:77.94px;height:11.64px;line-height:11.64px;font-size:9.7px;text-align:right;color:#1c1c1c;letter-spacing:0.24px;">85,50 €</div>
<div class="t s" style="left:665.30px;top:495.57px;width:8.70px;height:11.64px;line-height:11.64px;font-size:9.7px;text-align:left;color:#1c1c1c;">-</div>
<div class="t s" style="left:642.00px;top:495.57px;width:84.94px;height:11.64px;line-height:11.64px;font-size:9.7px;text-align:right;color:#1c1c1c;letter-spacing:0.24px;">85,50 €</div>
<div class="t s" style="left:20.00px;top:511.57px;width:101.54px;height:11.64px;line-height:11.64px;font-size:9.7px;text-align:right;color:#1c1c1c;letter-spacing:0.24px;">11</div>
<div class="t s" style="left:103.00px;top:511.57px;width:98.94px;height:11.64px;line-height:11.64px;font-size:9.7px;text-align:right;color:#1c1c1c;letter-spacing:0.24px;">100,00 €</div>
<div class="t s" style="left:260.00px;top:511.57px;width:25.70px;height:11.64px;line-height:11.64px;font-size:9.7px;text-align:right;color:#1c1c1c;">€</div>
<div class="t s" style="left:250.00px;top:511.57px;width:21.70px;height:11.64px;line-height:11.64px;font-size:9.7px;text-align:right;color:#1c1c1c;">-</div>
<div class="t s" style="left:270.00px;top:511.57px;width:83.94px;height:11.64px;line-height:11.64px;font-size:9.7px;text-align:right;color:#1c1c1c;letter-spacing:0.24px;">19,00 €</div>
<div class="t s" style="left:338.00px;top:511.57px;width:75.94px;height:11.64px;line-height:11.64px;font-size:9.7px;text-align:right;color:#1c1c1c;letter-spacing:0.24px;">95,00 €</div>
<div class="t s" style="left:398.00px;top:511.57px;width:75.94px;height:11.64px;line-height:11.64px;font-size:9.7px;text-align:right;color:#1c1c1c;letter-spacing:0.24px;">4.789,92 €</div>
<div class="t s" style="left:509.00px;top:511.57px;width:25.70px;height:11.64px;line-height:11.64px;font-size:9.7px;text-align:right;color:#1c1c1c;">€</div>
<div class="t s" style="left:499.00px;top:511.57px;width:21.70px;height:11.64px;line-height:11.64px;font-size:9.7px;text-align:right;color:#1c1c1c;">-</div>
<div class="t s" style="left:570.00px;top:511.57px;width:25.70px;height:11.64px;line-height:11.64px;font-size:9.7px;text-align:right;color:#1c1c1c;">€</div>
<div class="t s" style="left:560.00px;top:511.57px;width:21.70px;height:11.64px;line-height:11.64px;font-size:9.7px;text-align:right;color:#1c1c1c;">-</div>
<div class="t s" style="left:580.00px;top:511.57px;width:77.94px;height:11.64px;line-height:11.64px;font-size:9.7px;text-align:right;color:#1c1c1c;letter-spacing:0.24px;">4.884,92 €</div>
<div class="t s" style="left:665.30px;top:511.57px;width:8.70px;height:11.64px;line-height:11.64px;font-size:9.7px;text-align:left;color:#1c1c1c;">-</div>
<div class="t s" style="left:642.00px;top:511.57px;width:84.94px;height:11.64px;line-height:11.64px;font-size:9.7px;text-align:right;color:#1c1c1c;letter-spacing:0.24px;">4.865,92 €</div>
<div class="t s" style="left:20.00px;top:527.57px;width:101.54px;height:11.64px;line-height:11.64px;font-size:9.7px;text-align:right;color:#1c1c1c;letter-spacing:0.24px;">12</div>
<div class="t s" style="left:176.00px;top:527.57px;width:25.70px;height:11.64px;line-height:11.64px;font-size:9.7px;text-align:right;color:#1c1c1c;">€</div>
<div class="t s" style="left:166.00px;top:527.57px;width:21.70px;height:11.64px;line-height:11.64px;font-size:9.7px;text-align:right;color:#1c1c1c;">-</div>
<div class="t s" style="left:260.00px;top:527.57px;width:25.70px;height:11.64px;line-height:11.64px;font-size:9.7px;text-align:right;color:#1c1c1c;">€</div>
<div class="t s" style="left:250.00px;top:527.57px;width:21.70px;height:11.64px;line-height:11.64px;font-size:9.7px;text-align:right;color:#1c1c1c;">-</div>
<div class="t s" style="left:328.00px;top:527.57px;width:25.70px;height:11.64px;line-height:11.64px;font-size:9.7px;text-align:right;color:#1c1c1c;">€</div>
<div class="t s" style="left:318.00px;top:527.57px;width:21.70px;height:11.64px;line-height:11.64px;font-size:9.7px;text-align:right;color:#1c1c1c;">-</div>
<div class="t s" style="left:338.00px;top:527.57px;width:75.94px;height:11.64px;line-height:11.64px;font-size:9.7px;text-align:right;color:#1c1c1c;letter-spacing:0.24px;">237,50 €</div>
<div class="t s" style="left:448.00px;top:527.57px;width:25.70px;height:11.64px;line-height:11.64px;font-size:9.7px;text-align:right;color:#1c1c1c;">€</div>
<div class="t s" style="left:438.00px;top:527.57px;width:21.70px;height:11.64px;line-height:11.64px;font-size:9.7px;text-align:right;color:#1c1c1c;">-</div>
<div class="t s" style="left:509.00px;top:527.57px;width:25.70px;height:11.64px;line-height:11.64px;font-size:9.7px;text-align:right;color:#1c1c1c;">€</div>
<div class="t s" style="left:499.00px;top:527.57px;width:21.70px;height:11.64px;line-height:11.64px;font-size:9.7px;text-align:right;color:#1c1c1c;">-</div>
<div class="t s" style="left:570.00px;top:527.57px;width:25.70px;height:11.64px;line-height:11.64px;font-size:9.7px;text-align:right;color:#1c1c1c;">€</div>
<div class="t s" style="left:560.00px;top:527.57px;width:21.70px;height:11.64px;line-height:11.64px;font-size:9.7px;text-align:right;color:#1c1c1c;">-</div>
<div class="t s" style="left:580.00px;top:527.57px;width:77.94px;height:11.64px;line-height:11.64px;font-size:9.7px;text-align:right;color:#1c1c1c;letter-spacing:0.24px;">237,50 €</div>
<div class="t s" style="left:665.30px;top:527.57px;width:8.70px;height:11.64px;line-height:11.64px;font-size:9.7px;text-align:left;color:#1c1c1c;">-</div>
<div class="t s" style="left:642.00px;top:527.57px;width:84.94px;height:11.64px;line-height:11.64px;font-size:9.7px;text-align:right;color:#1c1c1c;letter-spacing:0.24px;">237,50 €</div>
<div class="t" style="left:22.50px;top:542.80px;width:117.50px;height:12.0px;line-height:12.0px;font-size:10.0px;text-align:left;color:#1c1c1c;font-weight:bold;letter-spacing:0.15px;">4. Quartal</div>
<div class="t" style="left:103.00px;top:543.07px;width:98.94px;height:11.64px;line-height:11.64px;font-size:9.7px;text-align:right;color:#1c1c1c;font-weight:bold;letter-spacing:0.24px;">100,00 €</div>
<div class="t" style="left:260.00px;top:543.07px;width:25.70px;height:11.64px;line-height:11.64px;font-size:9.7px;text-align:right;color:#1c1c1c;font-weight:bold;">€</div>
<div class="t" style="left:250.00px;top:543.07px;width:21.70px;height:11.64px;line-height:11.64px;font-size:9.7px;text-align:right;color:#1c1c1c;font-weight:bold;">-</div>
<div class="t" style="left:270.00px;top:543.07px;width:83.94px;height:11.64px;line-height:11.64px;font-size:9.7px;text-align:right;color:#1c1c1c;font-weight:bold;letter-spacing:0.24px;">19,00 €</div>
<div class="t" style="left:338.00px;top:543.07px;width:75.94px;height:11.64px;line-height:11.64px;font-size:9.7px;text-align:right;color:#1c1c1c;font-weight:bold;letter-spacing:0.24px;">408,50 €</div>
<div class="t" style="left:398.00px;top:543.07px;width:75.94px;height:11.64px;line-height:11.64px;font-size:9.7px;text-align:right;color:#1c1c1c;font-weight:bold;letter-spacing:0.24px;">4.789,92 €</div>
<div class="t" style="left:458.00px;top:543.07px;width:76.94px;height:11.64px;line-height:11.64px;font-size:9.7px;text-align:right;color:#1c1c1c;font-weight:bold;letter-spacing:0.24px;">9,50 €</div>
<div class="t" style="left:570.00px;top:543.07px;width:25.70px;height:11.64px;line-height:11.64px;font-size:9.7px;text-align:right;color:#1c1c1c;font-weight:bold;">€</div>
<div class="t" style="left:560.00px;top:543.07px;width:21.70px;height:11.64px;line-height:11.64px;font-size:9.7px;text-align:right;color:#1c1c1c;font-weight:bold;">-</div>
<div class="t" style="left:580.00px;top:543.07px;width:77.94px;height:11.64px;line-height:11.64px;font-size:9.7px;text-align:right;color:#1c1c1c;font-weight:bold;letter-spacing:0.24px;">5.207,92 €</div>
<div class="t" style="left:665.30px;top:543.07px;width:8.70px;height:11.64px;line-height:11.64px;font-size:9.7px;text-align:left;color:#1c1c1c;font-weight:bold;">-</div>
<div class="t" style="left:642.00px;top:543.07px;width:84.94px;height:11.64px;line-height:11.64px;font-size:9.7px;text-align:right;color:#1c1c1c;font-weight:bold;letter-spacing:0.24px;">5.188,92 €</div>
<div class="t" style="left:755.30px;top:543.07px;width:8.70px;height:11.64px;line-height:11.64px;font-size:9.7px;text-align:left;color:#1c1c1c;font-weight:bold;">-</div>
<div class="t" style="left:732.00px;top:543.07px;width:175.94px;height:11.64px;line-height:11.64px;font-size:9.7px;text-align:right;color:#1c1c1c;font-weight:bold;letter-spacing:0.24px;">5.188,92 €</div>
<div class="t" style="left:22.50px;top:559.80px;width:117.50px;height:12.0px;line-height:12.0px;font-size:10.0px;text-align:left;color:#1c1c1c;font-weight:bold;letter-spacing:0.15px;">Jahr</div>
<div class="t" style="left:103.00px;top:560.07px;width:98.94px;height:11.64px;line-height:11.64px;font-size:9.7px;text-align:right;color:#1c1c1c;font-weight:bold;letter-spacing:0.24px;">51.860,00 €</div>
<div class="t" style="left:260.00px;top:560.07px;width:25.70px;height:11.64px;line-height:11.64px;font-size:9.7px;text-align:right;color:#1c1c1c;font-weight:bold;">€</div>
<div class="t" style="left:250.00px;top:560.07px;width:21.70px;height:11.64px;line-height:11.64px;font-size:9.7px;text-align:right;color:#1c1c1c;font-weight:bold;">-</div>
<div class="t" style="left:270.00px;top:560.07px;width:83.94px;height:11.64px;line-height:11.64px;font-size:9.7px;text-align:right;color:#1c1c1c;font-weight:bold;letter-spacing:0.24px;">9.853,40 €</div>
<div class="t" style="left:338.00px;top:560.07px;width:75.94px;height:11.64px;line-height:11.64px;font-size:9.7px;text-align:right;color:#1c1c1c;font-weight:bold;letter-spacing:0.24px;">1.763,20 €</div>
<div class="t" style="left:398.00px;top:560.07px;width:75.94px;height:11.64px;line-height:11.64px;font-size:9.7px;text-align:right;color:#1c1c1c;font-weight:bold;letter-spacing:0.24px;">4.941,92 €</div>
<div class="t" style="left:458.00px;top:560.07px;width:76.94px;height:11.64px;line-height:11.64px;font-size:9.7px;text-align:right;color:#1c1c1c;font-weight:bold;letter-spacing:0.24px;">9,50 €</div>
<div class="t" style="left:519.00px;top:560.07px;width:76.94px;height:11.64px;line-height:11.64px;font-size:9.7px;text-align:right;color:#1c1c1c;font-weight:bold;letter-spacing:0.24px;">228,00 €</div>
<div class="t" style="left:580.00px;top:560.07px;width:77.94px;height:11.64px;line-height:11.64px;font-size:9.7px;text-align:right;color:#1c1c1c;font-weight:bold;letter-spacing:0.24px;">6.942,62 €</div>
<div class="t" style="left:642.00px;top:560.07px;width:84.94px;height:11.64px;line-height:11.64px;font-size:9.7px;text-align:right;color:#1c1c1c;font-weight:bold;letter-spacing:0.24px;">2.910,78 €</div>
<div class="t" style="left:732.00px;top:560.07px;width:175.94px;height:11.64px;line-height:11.64px;font-size:9.7px;text-align:right;color:#1c1c1c;font-weight:bold;letter-spacing:0.24px;">2.956,38 €</div>
<div style="left:0px;top:614px;width:1024px;height:22px;background:#e4e4e4;"></div>
<div style="left:0px;top:614px;width:1024px;height:1px;background:#c8c8c8;"></div>
<div style="left:1008px;top:162px;width:16px;height:452px;background:#e6e6e6;"></div>
<div style="left:1007px;top:177px;width:1px;height:437px;background:#c6c6c6;"></div>
<div style="left:1010.5px;top:165px;width:11.5px;height:10.5px;background:#f7f7f7;border:1px solid #d0d0d0;box-sizing:border-box;"></div>
<div style="left:1010.5px;top:176.5px;width:11.5px;height:407px;background:#f4f4f4;border:1px solid #d2d2d2;box-sizing:border-box;"></div>
<div style="left:1010.5px;top:583.5px;width:11.5px;height:19px;background:#d9d9d9;"></div>
<div style="left:1011px;top:603px;width:10.5px;height:10px;background:#f7f7f7;border:1px solid #d0d0d0;box-sizing:border-box;"></div>
<svg style="position:absolute;left:1011px;top:165px" width="11" height="10"><polygon points="2.8,6.5 8.2,6.5 5.5,3.5" fill="#555"/></svg>
<svg style="position:absolute;left:1011px;top:603px" width="11" height="10"><polygon points="2.8,3.5 8.2,3.5 5.5,6.5" fill="#555"/></svg>
<svg style="position:absolute;left:20px;top:620px" width="10" height="12"><polygon points="7,2 7,10 3,6" fill="#3a3a3a"/></svg>
<svg style="position:absolute;left:41px;top:620px" width="10" height="12"><polygon points="3,2 3,10 7,6" fill="#b0b0b0"/></svg>
<div class="t" style="left:60.00px;top:621.90px;width:20.00px;height:12.0px;line-height:12.0px;font-size:10px;text-align:center;color:#333;font-weight:bold;">...</div>
<div style="left:80px;top:617px;width:1px;height:17px;background:#c8c8c8;"></div>
<div style="left:81px;top:616.5px;width:57px;height:17.5px;background:#efec14;"></div>
<div class="t" style="left:81.00px;top:620.08px;width:57.00px;height:11.76px;line-height:11.76px;font-size:9.8px;text-align:center;color:#222;">ESt.Zahl</div>
<div style="left:140px;top:616.5px;width:99px;height:17.5px;background:#efec14;"></div>
<div class="t" style="left:140.00px;top:620.08px;width:99.00px;height:11.76px;line-height:11.76px;font-size:9.8px;text-align:center;color:#222;">Sonst.Leist.Entn.</div>
<div style="left:241px;top:616.5px;width:79px;height:17.5px;background:#efec14;"></div>
<div class="t" style="left:241.00px;top:620.08px;width:79.00px;height:11.76px;line-height:11.76px;font-size:9.8px;text-align:center;color:#222;">Kfz-Nutzung</div>
<div style="left:322px;top:616.5px;width:88px;height:17.5px;background:#efec14;"></div>
<div class="t" style="left:322.00px;top:620.08px;width:88.00px;height:11.76px;line-height:11.76px;font-size:9.8px;text-align:center;color:#222;">Arbeitszimmer</div>
<div style="left:412.5px;top:616.5px;width:55.5px;height:17.5px;background:#1a6fbf;"></div>
<div class="t" style="left:412.50px;top:620.08px;width:55.50px;height:11.76px;line-height:11.76px;font-size:9.8px;text-align:center;color:#ffffff;">pr.Ausg</div>
<div style="left:549px;top:616.5px;width:63px;height:17.5px;background:#7cc14a;"></div>
<div class="t" style="left:549.00px;top:620.08px;width:63.00px;height:11.76px;line-height:11.76px;font-size:9.8px;text-align:center;color:#222;">USt.Erklär</div>
<div style="left:615px;top:616.5px;width:40px;height:17.5px;background:#7cc14a;"></div>
<div class="t" style="left:615.00px;top:620.08px;width:40.00px;height:11.76px;line-height:11.76px;font-size:9.8px;text-align:center;color:#222;">BWA</div>
<div style="left:658px;top:616.5px;width:35px;height:17.5px;background:#7cc14a;"></div>
<div class="t" style="left:658.00px;top:620.08px;width:35.00px;height:11.76px;line-height:11.76px;font-size:9.8px;text-align:center;color:#222;">EÜR</div>
<div style="left:469px;top:614px;width:78px;height:21px;background:#f2f2f2;"></div>
<div style="left:469px;top:632px;width:78px;height:1.6px;background:#217346;"></div>
<div class="t" style="left:469.00px;top:620.01px;width:78.00px;height:12.24px;line-height:12.24px;font-size:10.2px;text-align:center;color:#2f6e46;font-weight:bold;">USt.Voranm</div>
<svg style="position:absolute;left:720.5px;top:618.5px" width="14" height="14"><circle cx="7" cy="7" r="5.8" fill="none" stroke="#666" stroke-width="1.1"/><path d="M7 3.8V10.2M3.8 7H10.2" stroke="#666" stroke-width="1.3"/></svg>
<div style="left:782.5px;top:620px;width:1px;height:1.2px;background:#a0a0a0;"></div>
<div style="left:782.5px;top:623px;width:1px;height:1.2px;background:#a0a0a0;"></div>
<div style="left:782.5px;top:626px;width:1px;height:1.2px;background:#a0a0a0;"></div>
<div style="left:782.5px;top:629px;width:1px;height:1.2px;background:#a0a0a0;"></div>
<div style="left:796.5px;top:619.5px;width:213px;height:12px;background:#dadada;"></div>
<div style="left:796.5px;top:619.5px;width:11.5px;height:12px;background:#f7f7f7;border:1px solid #cfcfcf;box-sizing:border-box;"></div>
<div style="left:807.5px;top:619.5px;width:173.5px;height:12px;background:#f4f4f4;border:1px solid #d2d2d2;box-sizing:border-box;"></div>
<div style="left:997.5px;top:619.5px;width:12px;height:12px;background:#f7f7f7;border:1px solid #cfcfcf;box-sizing:border-box;"></div>
<svg style="position:absolute;left:796.5px;top:620.5px" width="12" height="12"><polygon points="7,3.2 7,8.8 4,6" fill="#555"/></svg>
<svg style="position:absolute;left:997.5px;top:620.5px" width="12" height="12"><polygon points="5,3.2 5,8.8 8,6" fill="#555"/></svg>
<div style="left:0px;top:636px;width:1024px;height:17px;background:#ebebeb;"></div>
<div class="t" style="left:6.00px;top:639.92px;width:74.00px;height:10.68px;line-height:10.68px;font-size:8.9px;text-align:left;color:#4a4a4a;">Bereit</div>
<div style="left:786px;top:636px;width:29.5px;height:17px;background:#d0d0d0;"></div>
<svg style="position:absolute;left:795.5px;top:639px" width="11" height="11"><path d="M0.5 0.5H10.5V10.5H0.5ZM3.8 0.5V10.5M7.2 0.5V10.5M0.5 3.8H10.5M0.5 7.2H10.5" fill="none" stroke="#6a6a6a" stroke-width="1"/></svg>
<svg style="position:absolute;left:826px;top:639px" width="11" height="11"><path d="M0.5 0.5H10.5V10.5H0.5Z" fill="none" stroke="#6a6a6a" stroke-width="1"/><path d="M2.5 2.5H8.5V8.5H2.5Z M4 4.5H7 M4 6.5H7" fill="none" stroke="#6a6a6a" stroke-width="0.9"/></svg>
<svg style="position:absolute;left:856px;top:638.5px" width="11" height="11"><path d="M0.5 0.5V10.5H10.5V0.5M0.5 7.5H10.5M5.5 0.5V7.5" fill="none" stroke="#6a6a6a" stroke-width="1"/></svg>
<div class="t" style="left:980.00px;top:640.14px;width:32.00px;height:11.04px;line-height:11.04px;font-size:9.2px;text-align:center;color:#4a4a4a;">100 %</div>
<div style="left:888px;top:644px;width:80px;height:1px;background:#a0a0a0;"></div>
<div style="left:927px;top:639.5px;width:3px;height:9.5px;background:#555;"></div>
<div style="left:880.5px;top:644px;width:5.5px;height:1.5px;background:#555;"></div>
<div style="left:970.5px;top:644px;width:7px;height:1.2px;background:#555;"></div>
<div style="left:973.4px;top:641.1px;width:1.2px;height:7px;background:#555;"></div>
<svg style="position:absolute;left:17px;top:8px;overflow:visible" width="12" height="11" viewBox="0 0 12 11"><path d="M0.75 0.75H11.25V10.25H0.75Z" fill="none" stroke="#f2f7f3" stroke-width="1.5"/><rect x="0" y="5" width="12" height="6" fill="#f2f7f3"/><rect x="3.5" y="7.5" width="5" height="2.5" fill="#2d6f47"/></svg>
<svg style="position:absolute;left:40px;top:8px;overflow:visible" width="12" height="11" viewBox="0 0 12 11"><path d="M2 4.5H7A3.2 3.2 0 0 1 7 10.9H5.5" fill="none" stroke="#f2f7f3" stroke-width="1.9"/><path d="M4.8 0.8L1.2 4.5L4.8 8.2" fill="none" stroke="#f2f7f3" stroke-width="1.9"/></svg>
<svg style="position:absolute;left:56px;top:12px;overflow:visible" width="5" height="3" viewBox="0 0 5 3"><polygon points="0,0 5,0 2.5,2.5" fill="#f2f7f3"/></svg>
<svg style="position:absolute;left:68px;top:8px;overflow:visible" width="12" height="11" viewBox="0 0 12 11"><path d="M10 4.5H4.8A3.3 3.3 0 0 0 4.8 11" fill="none" stroke="#4f9a6c" stroke-width="1.7"/><path d="M7.2 0.8L11 4.5L7.2 8.2" fill="none" stroke="#4f9a6c" stroke-width="1.7"/></svg>
<svg style="position:absolute;left:84.5px;top:12px;overflow:visible" width="4" height="2" viewBox="0 0 4 2"><rect x="0" y="0" width="3" height="1.5" fill="#4f9a6c"/></svg>
<svg style="position:absolute;left:99px;top:10.5px;overflow:visible" width="6" height="6" viewBox="0 0 6 6"><rect x="0.3" y="0.5" width="5" height="1.2" fill="#f2f7f3"/><polygon points="0.3,2.8 5.3,2.8 2.8,5.3" fill="#f2f7f3"/></svg>
<svg style="position:absolute;left:890.5px;top:8.5px;overflow:visible" width="11" height="8" viewBox="0 0 11 8"><rect x="0.5" y="0.5" width="10" height="7" fill="none" stroke="#f2f7f3" stroke-width="1"/><polygon points="3,5 8,5 5.5,2.2" fill="#f2f7f3"/><rect x="2" y="5.3" width="7" height="1" fill="#f2f7f3"/></svg>
<svg style="position:absolute;left:929px;top:12px;overflow:visible" width="9" height="1" viewBox="0 0 9 1"><rect x="0" y="0" width="9" height="1" fill="#f2f7f3"/></svg>
<svg style="position:absolute;left:966px;top:8px;overflow:visible" width="9" height="9" viewBox="0 0 9 9"><rect x="0.5" y="0.5" width="8" height="8" fill="none" stroke="#f2f7f3" stroke-width="1"/></svg>
<svg style="position:absolute;left:1002px;top:8.5px;overflow:visible" width="9" height="8" viewBox="0 0 9 8"><path d="M0.5 0.3L8.5 7.7M8.5 0.3L0.5 7.7" stroke="#f2f7f3" stroke-width="1.1"/></svg>
<svg style="position:absolute;left:948px;top:33px;overflow:visible" width="13" height="13" viewBox="0 0 13 13"><circle cx="5" cy="4" r="3.2" fill="none" stroke="#f2f7f3" stroke-width="1.2"/><path d="M0.8 12.5C1 9 3 7.5 5 7.5C6 7.5 7 7.8 7.6 8.3" fill="none" stroke="#f2f7f3" stroke-width="1.2"/><path d="M9.5 8V13M7 10.5H12" stroke="#f2f7f3" stroke-width="1.2"/></svg>
<svg style="position:absolute;left:468px;top:33px;overflow:visible" width="9" height="13" viewBox="0 0 9 13"><path d="M4.5 0.8A3.8 3.8 0 0 0 2.2 7.6V9.6H6.8V7.6A3.8 3.8 0 0 0 4.5 0.8Z" fill="none" stroke="#f2f7f3" stroke-width="1.1"/><path d="M2.8 11.2H6.2" stroke="#f2f7f3" stroke-width="1.1"/></svg>
<svg style="position:absolute;left:18px;top:57px;overflow:visible" width="24" height="25" viewBox="0 0 24 25"><rect x="0.5" y="3.5" width="18" height="19" fill="#cfcfcf" stroke="#c2c2c2"/><rect x="5" y="1.5" width="9" height="4" rx="1" fill="#bdbdbd"/><circle cx="9.5" cy="1.8" r="1.5" fill="#bdbdbd"/><path d="M11.5 9.5H19L22.5 13V24.5H11.5Z" fill="#f4f4f4" stroke="#b9b9b9"/><path d="M19 9.5V13H22.5" fill="none" stroke="#b9b9b9"/></svg>
<div class="t" style="left:5.00px;top:85.85px;width:45.00px;height:11.16px;line-height:11.16px;font-size:9.3px;text-align:center;color:#a5a5a5;">Einfügen</div>
<svg style="position:absolute;left:25.5px;top:103px;overflow:visible" width="4" height="2" viewBox="0 0 4 2"><rect x="0" y="0" width="3.5" height="1.2" fill="#a8a8a8"/></svg>
<svg style="position:absolute;left:51.5px;top:56.5px;overflow:visible" width="12" height="13" viewBox="0 0 12 13"><path d="M2.5 0.5L8.2 8.5M9.5 0.5L3.8 8.5" stroke="#505050" stroke-width="1.3"/><circle cx="2.8" cy="10" r="2.2" fill="none" stroke="#5f8fc7" stroke-width="1.3"/><circle cx="9.2" cy="10" r="2.2" fill="none" stroke="#5f8fc7" stroke-width="1.3"/></svg>
<svg style="position:absolute;left:51px;top:75.5px;overflow:visible" width="13" height="12" viewBox="0 0 13 12"><path d="M0.5 0.5H5.5L7 2V8.5H0.5Z" fill="#f6f6f6" stroke="#4a4a4a"/><path d="M5 3.5H10.5L12 5V11.5H5Z" fill="#f6f6f6" stroke="#4a4a4a"/><path d="M2 3H4.5M2 5H4.5M6.5 7H10M6.5 9H10" stroke="#6d8fbf" stroke-width="0.9"/></svg>
<svg style="position:absolute;left:68.5px;top:80px;overflow:visible" width="5" height="3" viewBox="0 0 5 3"><polygon points="0,0 5,0 2.5,3" fill="#555"/></svg>
<svg style="position:absolute;left:51.5px;top:93.5px;overflow:visible" width="13" height="12" viewBox="0 0 13 12"><path d="M8.5 4.5L11.8 1.2" stroke="#4a4a4a" stroke-width="2.4"/><path d="M1 9.5L5 5.2L8.2 8.4L4 12Z" fill="#e3bd5c"/><path d="M5.2 5.2L6.8 3.6L9.6 6.4L8 8" fill="#5a5a5a"/></svg>
<svg style="position:absolute;left:75px;top:116px;overflow:visible" width="6" height="6" viewBox="0 0 6 6"><path d="M0.5 5V0.5H5" fill="none" stroke="#8a8a8a" stroke-width="1"/><path d="M2 2L5.5 5.5M5.5 2.8V5.5H2.8" fill="none" stroke="#8a8a8a" stroke-width="1"/></svg>
<svg style="position:absolute;left:242px;top:116px;overflow:visible" width="6" height="6" viewBox="0 0 6 6"><path d="M0.5 5V0.5H5" fill="none" stroke="#8a8a8a" stroke-width="1"/><path d="M2 2L5.5 5.5M5.5 2.8V5.5H2.8" fill="none" stroke="#8a8a8a" stroke-width="1"/></svg>
<svg style="position:absolute;left:374.5px;top:116px;overflow:visible" width="6" height="6" viewBox="0 0 6 6"><path d="M0.5 5V0.5H5" fill="none" stroke="#8a8a8a" stroke-width="1"/><path d="M2 2L5.5 5.5M5.5 2.8V5.5H2.8" fill="none" stroke="#8a8a8a" stroke-width="1"/></svg>
<svg style="position:absolute;left:486px;top:116px;overflow:visible" width="6" height="6" viewBox="0 0 6 6"><path d="M0.5 5V0.5H5" fill="none" stroke="#8a8a8a" stroke-width="1"/><path d="M2 2L5.5 5.5M5.5 2.8V5.5H2.8" fill="none" stroke="#8a8a8a" stroke-width="1"/></svg>
<div style="left:88px;top:60.5px;width:88px;height:18.5px;background:#f2f2f2;border:1px solid #c9c9c9;box-sizing:border-box"></div>
<div style="left:175.5px;top:60.5px;width:35px;height:18.5px;background:#f2f2f2;border:1px solid #c9c9c9;box-sizing:border-box"></div>
<div class="t r" style="left:90.50px;top:64.97px;width:69.50px;height:11.52px;line-height:11.52px;font-size:9.6px;text-align:left;color:#555;">Calibri</div>
<div class="t r" style="left:178.50px;top:64.97px;width:21.50px;height:11.52px;line-height:11.52px;font-size:9.6px;text-align:left;color:#555;">11</div>
<svg style="position:absolute;left:168px;top:69px;overflow:visible" width="5" height="3" viewBox="0 0 5 3"><polygon points="0,0 4.5,0 2.25,2.8" fill="#555"/></svg>
<svg style="position:absolute;left:202.5px;top:69px;overflow:visible" width="5" height="3" viewBox="0 0 5 3"><polygon points="0,0 4.5,0 2.25,2.8" fill="#555"/></svg>
<svg style="position:absolute;left:215px;top:63.5px;overflow:visible" width="12" height="11" viewBox="0 0 12 11"><path d="M0.8 10.5L3.8 2.5L6.8 10.5M1.9 7.6H5.7" fill="none" stroke="#4d4d4d" stroke-width="1.4"/><polygon points="6.3,2.2 10.3,2.2 8.3,0.2" fill="#3f6aa0"/></svg>
<svg style="position:absolute;left:233px;top:63.5px;overflow:visible" width="11" height="11" viewBox="0 0 11 11"><path d="M0.8 10.5L3.2 4.2L5.6 10.5M1.7 8.2H4.7" fill="none" stroke="#4d4d4d" stroke-width="1.3"/><polygon points="7,0.3 10,0.3 8.5,2.2" fill="#3f6aa0"/></svg>
<div class="t r" style="left:90.00px;top:88.37px;width:14.00px;height:11.52px;line-height:11.52px;font-size:9.6px;text-align:center;color:#3c3c3c;font-weight:bold;">F</div>
<div class="t r" style="left:106.00px;top:88.37px;width:15.00px;height:11.52px;line-height:11.52px;font-size:9.6px;text-align:center;color:#3c3c3c;font-weight:bold;"><i>K</i></div>
<div class="t r" style="left:124.00px;top:88.37px;width:14.00px;height:11.52px;line-height:11.52px;font-size:9.6px;text-align:center;color:#3c3c3c;font-weight:bold;">U</div>
<svg style="position:absolute;left:127.5px;top:97.8px;overflow:visible" width="7.5" height="1.2" viewBox="0 0 7.5 1.2"><rect x="0" y="0" width="7.5" height="1.2" fill="#3c3c3c"/></svg>
<svg style="position:absolute;left:143px;top:93.5px;overflow:visible" width="5" height="3" viewBox="0 0 5 3"><polygon points="0,0 4.5,0 2.25,2.8" fill="#555"/></svg>
<svg style="position:absolute;left:177px;top:93.5px;overflow:visible" width="5" height="3" viewBox="0 0 5 3"><polygon points="0,0 4.5,0 2.25,2.8" fill="#555"/></svg>
<svg style="position:absolute;left:211px;top:93.5px;overflow:visible" width="5" height="3" viewBox="0 0 5 3"><polygon points="0,0 4.5,0 2.25,2.8" fill="#555"/></svg>
<svg style="position:absolute;left:238px;top:93.5px;overflow:visible" width="5" height="3" viewBox="0 0 5 3"><polygon points="0,0 4.5,0 2.25,2.8" fill="#555"/></svg>
<div style="left:154px;top:84px;width:1px;height:20px;background:#d6d6d6"></div>
<div style="left:187.5px;top:84px;width:1px;height:20px;background:#d6d6d6"></div>
<svg style="position:absolute;left:160px;top:87.5px;overflow:visible" width="12" height="11" viewBox="0 0 12 11"><path d="M0.5 0.5H11.5V10.5H0.5Z M6 0.5V10.5 M0.5 5.5H11.5" fill="none" stroke="#a0a0a0" stroke-width="0.9" stroke-dasharray="1 1"/><rect x="0" y="9.6" width="12" height="1.1" fill="#777"/></svg>
<svg style="position:absolute;left:193.5px;top:86.5px;overflow:visible" width="15" height="14" viewBox="0 0 15 14"><path d="M5.5 1L10.5 6L6.5 10L1.5 5Z" fill="#f6f6f6" stroke="#555" stroke-width="1.1"/><path d="M5 0.5V4" stroke="#555" stroke-width="1"/><path d="M11 6.5Q13 9 11.8 10" fill="#4a7cc0" stroke="#4a7cc0"/><rect x="0.5" y="10.3" width="12.5" height="3.3" fill="#f0ec1a"/></svg>
<svg style="position:absolute;left:220.5px;top:86.5px;overflow:visible" width="14" height="14" viewBox="0 0 14 14"><path d="M2.8 9L6.8 1L10.8 9M4.1 6.3H9.5" fill="none" stroke="#4a4a4a" stroke-width="1.3"/><rect x="0" y="10.2" width="13.7" height="3.3" fill="#d9141b"/></svg>
<div style="left:288px;top:60.5px;width:17px;height:18px;background:#c8c8c8"></div>
<div style="left:350px;top:60.5px;width:17px;height:18px;background:#c8c8c8"></div>
<div style="left:256px;top:63px;width:11px;height:1.2px;background:#7a7a7a"></div>
<div style="left:256px;top:65.3px;width:11px;height:1.2px;background:#7a7a7a"></div>
<div style="left:256px;top:67.8px;width:11px;height:1.2px;background:#7a7a7a"></div>
<div style="left:273.5px;top:66px;width:11.0px;height:1.2px;background:#7a7a7a"></div>
<div style="left:273.5px;top:68.4px;width:11.0px;height:1.2px;background:#7a7a7a"></div>
<div style="left:273.5px;top:71px;width:11.0px;height:1.2px;background:#7a7a7a"></div>
<div style="left:291px;top:70px;width:11px;height:1.2px;background:#7a7a7a"></div>
<div style="left:291px;top:72.3px;width:11px;height:1.2px;background:#7a7a7a"></div>
<div style="left:291px;top:74.8px;width:11px;height:1.2px;background:#7a7a7a"></div>
<div style="left:256px;top:89.8px;width:11px;height:1.2px;background:#7a7a7a"></div>
<div style="left:273.5px;top:89.8px;width:11.0px;height:1.2px;background:#7a7a7a"></div>
<div style="left:291px;top:89.8px;width:11px;height:1.2px;background:#7a7a7a"></div>
<div style="left:256px;top:92.2px;width:8px;height:1.2px;background:#7a7a7a"></div>
<div style="left:275.5px;top:92.2px;width:7.0px;height:1.2px;background:#7a7a7a"></div>
<div style="left:294px;top:92.2px;width:8px;height:1.2px;background:#7a7a7a"></div>
<div style="left:256px;top:94.8px;width:11px;height:1.2px;background:#7a7a7a"></div>
<div style="left:273.5px;top:94.8px;width:11.0px;height:1.2px;background:#7a7a7a"></div>
<div style="left:291px;top:94.8px;width:11px;height:1.2px;background:#7a7a7a"></div>
<div style="left:256px;top:97.2px;width:8px;height:1.2px;background:#7a7a7a"></div>
<div style="left:275.5px;top:97.2px;width:7.0px;height:1.2px;background:#7a7a7a"></div>
<div style="left:294px;top:97.2px;width:8px;height:1.2px;background:#7a7a7a"></div>
<svg style="position:absolute;left:309.5px;top:62.5px;overflow:visible" width="21" height="13" viewBox="0 0 21 13"><text x="0" y="0" transform="translate(3.2,10.5) rotate(-45)" font-family="Liberation Sans" font-size="8.5" font-weight="bold" fill="#4a4a4a">ab</text><path d="M5.5 12L12.5 5" stroke="#4a4a4a" stroke-width="1.2"/><polygon points="11,3.8 14,2.5 13,5.8" fill="#4a4a4a"/><polygon points="16.5,6 20.5,6 18.5,8.5" fill="#555"/></svg>
<svg style="position:absolute;left:352.5px;top:63px;overflow:visible" width="13" height="12" viewBox="0 0 13 12"><rect x="0.5" y="0.5" width="7.5" height="4" fill="#f4f4f4" stroke="#555" stroke-width="0.9"/><rect x="0.5" y="6.5" width="7.5" height="4" fill="#f4f4f4" stroke="#555" stroke-width="0.9"/><path d="M8.5 2.5H10.8A2 2 0 0 1 10.8 6.5H9.5" fill="none" stroke="#5b7fae" stroke-width="1.1"/><polygon points="10,5 8,6.5 10,8" fill="#5b7fae"/></svg>
<svg style="position:absolute;left:310px;top:88px;overflow:visible" width="14" height="11.5" viewBox="0 0 14 11.5"><rect x="0" y="0" width="13.5" height="1.2" fill="#555"/><rect x="6" y="3" width="7.5" height="1.1" fill="#777"/><rect x="6" y="5.4" width="7.5" height="1.1" fill="#555"/><rect x="6" y="7.8" width="7.5" height="1.1" fill="#777"/><rect x="0" y="10.2" width="13.5" height="1.2" fill="#555"/><path d="M5.2 6H1.2M3.2 4L1 6L3.2 8" fill="none" stroke="#4a7cc0" stroke-width="1.6"/></svg>
<svg style="position:absolute;left:327.5px;top:88px;overflow:visible" width="14" height="11.5" viewBox="0 0 14 11.5"><rect x="0" y="0" width="13.5" height="1.2" fill="#555"/><rect x="6" y="3" width="7.5" height="1.1" fill="#777"/><rect x="6" y="5.4" width="7.5" height="1.1" fill="#555"/><rect x="6" y="7.8" width="7.5" height="1.1" fill="#777"/><rect x="0" y="10.2" width="13.5" height="1.2" fill="#555"/><path d="M0.5 6H4.5M2.5 4L4.7 6L2.5 8" fill="none" stroke="#4a7cc0" stroke-width="1.6"/></svg>
<div style="left:346.5px;top:58px;width:1px;height:46px;background:#dcdcdc"></div>
<svg style="position:absolute;left:352px;top:87.5px;overflow:visible" width="13" height="13" viewBox="0 0 13 13"><rect x="0.5" y="0.5" width="11.5" height="11.5" fill="#f4f4f4" stroke="#666" stroke-width="1"/><path d="M0.5 3.5H12M0.5 9H12M6.25 0.5V3.5M6.25 9V12" stroke="#666" stroke-width="0.9"/><path d="M2.5 6.25H10M8.3 4.8L10 6.25L8.3 7.7" fill="none" stroke="#555" stroke-width="1"/></svg>
<svg style="position:absolute;left:370px;top:93px;overflow:visible" width="5" height="3" viewBox="0 0 5 3"><polygon points="0,0 4.5,0 2.25,2.8" fill="#555"/></svg>
<div style="left:385px;top:60.5px;width:103.5px;height:18.5px;background:#f2f2f2;border:1px solid #c9c9c9;box-sizing:border-box"></div>
<div class="t r" style="left:388.00px;top:64.97px;width:72.00px;height:11.52px;line-height:11.52px;font-size:9.6px;text-align:left;color:#555;">Standard</div>
<svg style="position:absolute;left:481px;top:69px;overflow:visible" width="5" height="3" viewBox="0 0 5 3"><polygon points="0,0 4.5,0 2.25,2.8" fill="#555"/></svg>
<svg style="position:absolute;left:386.5px;top:87.5px;overflow:visible" width="14" height="13" viewBox="0 0 14 13"><rect x="0.5" y="0.5" width="12.5" height="6.5" fill="#dfe8f4" stroke="#3f6aa0" stroke-width="1.1"/><ellipse cx="6.75" cy="3.75" rx="2.2" ry="1.8" fill="#3f6aa0"/><ellipse cx="8.5" cy="8.8" rx="3.5" ry="1.5" fill="#e8c06a"/><ellipse cx="7" cy="10.5" rx="3.5" ry="1.5" fill="#d9a94a"/></svg>
<svg style="position:absolute;left:404.5px;top:93.5px;overflow:visible" width="5" height="3" viewBox="0 0 5 3"><polygon points="0,0 4.5,0 2.25,2.8" fill="#555"/></svg>
<div class="t r" style="left:410.00px;top:87.27px;width:22.00px;height:15.0px;line-height:15.0px;font-size:12.5px;text-align:center;color:#555;">%</div>
<div class="t r" style="left:430.00px;top:89.83px;width:17.00px;height:9.12px;line-height:9.12px;font-size:7.6px;text-align:center;color:#555;font-weight:bold;">000</div>
<div style="left:450.5px;top:84px;width:1px;height:20px;background:#d6d6d6"></div>
<svg style="position:absolute;left:456px;top:88px;overflow:visible" width="14" height="12" viewBox="0 0 14 12"><text x="6.5" y="5.8" font-family="Liberation Sans" font-size="6.8" font-weight="bold" fill="#555">0</text><text x="1.2" y="11.5" font-family="Liberation Sans" font-size="6.8" font-weight="bold" fill="#555">,00</text><path d="M5.5 3.2H1.3M3 1.5L1.2 3.2L3 4.9" fill="none" stroke="#3f6aa0" stroke-width="1.2"/></svg>
<svg style="position:absolute;left:473.5px;top:88px;overflow:visible" width="14" height="12" viewBox="0 0 14 12"><text x="5" y="5.8" font-family="Liberation Sans" font-size="6.8" font-weight="bold" fill="#555">,00</text><text x="7.5" y="11.5" font-family="Liberation Sans" font-size="6.8" font-weight="bold" fill="#555">0</text><path d="M0.8 8.7H5.3M3.6 7L5.4 8.7L3.6 10.4" fill="none" stroke="#3f6aa0" stroke-width="1.2"/></svg>
<svg style="position:absolute;left:519px;top:58px;overflow:visible" width="24" height="24" viewBox="0 0 24 24"><rect x="0.5" y="0.5" width="21" height="19" fill="#f6f6f6" stroke="#777" stroke-width="1"/><rect x="6" y="1" width="5" height="4.5" fill="#c0504d"/><rect x="6" y="5.5" width="9.5" height="4.5" fill="#3d73b5"/><rect x="6" y="10" width="6.5" height="4.5" fill="#c0504d"/><rect x="6" y="14.5" width="3.5" height="5" fill="#3d73b5"/><path d="M5.75 0.5V19.5M11 0.5V19.5M16.25 0.5V19.5M0.5 5.25H21.5M0.5 10H21.5M0.5 14.75H21.5" stroke="#b5b5b5" stroke-width="0.8"/><rect x="11.5" y="14.5" width="12" height="9" fill="#fafafa" stroke="#777" stroke-width="1"/><path d="M14.5 18H20.5M14.5 20.3H20.5M19 16L16 22.5" stroke="#444" stroke-width="1"/></svg>
<div class="t r" style="left:498.00px;top:84.75px;width:64.00px;height:11.28px;line-height:11.28px;font-size:9.4px;text-align:center;color:#444;">Bedingte</div>
<div class="t r" style="left:493.00px;top:98.25px;width:73.00px;height:11.28px;line-height:11.28px;font-size:9.4px;text-align:left;color:#444;padding-left:5px">Formatierung</div>
<svg style="position:absolute;left:557px;top:103px;overflow:visible" width="5" height="3" viewBox="0 0 5 3"><polygon points="0,0 4.5,0 2.25,2.8" fill="#555"/></svg>
<svg style="position:absolute;left:583px;top:60px;overflow:visible" width="24" height="23" viewBox="0 0 24 23"><rect x="0.5" y="0.5" width="19.5" height="16" fill="#f6f6f6" stroke="#7a7a7a" stroke-width="1"/><rect x="5.5" y="4.5" width="14" height="11.5" fill="#bfc9d6"/><path d="M5.5 0.5V16.5M10.5 0.5V16.5M15.5 0.5V16.5M0.5 4.5H20M0.5 8.5H20M0.5 12.5H20" stroke="#8a8a8a" stroke-width="0.8"/><path d="M23 5.5L16 14" stroke="#5a5a5a" stroke-width="3"/><path d="M16.5 13.5C13 13 11 16 8 22C12 21 16 19 17 15.5Z" fill="#2f5ea8" stroke="#dbe6f4" stroke-width="0.6"/></svg>
<div class="t r" style="left:566.00px;top:84.75px;width:56.00px;height:11.28px;line-height:11.28px;font-size:9.4px;text-align:center;color:#444;">Als Tabelle</div>
<div class="t r" style="left:560.00px;top:98.25px;width:66.00px;height:11.28px;line-height:11.28px;font-size:9.4px;text-align:left;color:#444;padding-left:5.5px">formatieren</div>
<svg style="position:absolute;left:617.5px;top:103px;overflow:visible" width="5" height="3" viewBox="0 0 5 3"><polygon points="0,0 4.5,0 2.25,2.8" fill="#555"/></svg>
<svg style="position:absolute;left:660px;top:58px;overflow:visible" width="25" height="23" viewBox="0 0 25 23"><rect x="0.5" y="0.5" width="20.5" height="17" fill="#f6f6f6" stroke="#7a7a7a" stroke-width="1"/><rect x="4" y="5.5" width="13" height="6" fill="#b9cbe3"/><path d="M0.5 5.5H21M0.5 11.5H21M4 0.5V17.5M17 0.5V17.5" stroke="#8a8a8a" stroke-width="0.8"/><path d="M24 5L17 14" stroke="#5a5a5a" stroke-width="3"/><path d="M17.5 13.5C14 13 12 16 9 22C13 21 17 19 18 15.5Z" fill="#2f5ea8" stroke="#dbe6f4" stroke-width="0.6"/></svg>
<div class="t r" style="left:620.00px;top:84.75px;width:102.00px;height:11.28px;line-height:11.28px;font-size:9.4px;text-align:center;color:#444;">Zellenformatvorlagen</div>
<svg style="position:absolute;left:669px;top:102.5px;overflow:visible" width="5" height="3" viewBox="0 0 5 3"><polygon points="0,0 4.5,0 2.25,2.8" fill="#555"/></svg>
<svg style="position:absolute;left:728px;top:56.5px;overflow:visible" width="14" height="13" viewBox="0 0 14 13"><path d="M0.5 0.5H7.5V12.5H0.5Z M0.5 4.5H7.5M0.5 8.5H7.5" fill="#f6f6f6" stroke="#777" stroke-width="0.9"/><rect x="8" y="4.5" width="5" height="4" fill="#f6f6f6" stroke="#777" stroke-width="0.8"/><path d="M6.5 6.5H1.5M3.5 4.8L1.3 6.5L3.5 8.2" fill="none" stroke="#3f6aa0" stroke-width="1.5"/></svg>
<svg style="position:absolute;left:728px;top:75px;overflow:visible" width="14" height="13" viewBox="0 0 14 13"><path d="M0.5 0.5H7.5V12.5H0.5Z M0.5 4.5H7.5M0.5 8.5H7.5" fill="#f6f6f6" stroke="#777" stroke-width="0.9"/><path d="M8 3.5L13 8.5M13 3.5L8 8.5" stroke="#d9434a" stroke-width="1.3"/></svg>
<svg style="position:absolute;left:728px;top:93px;overflow:visible" width="12" height="13" viewBox="0 0 12 13"><rect x="0.5" y="0.5" width="11" height="1.5" fill="#3f6aa0"/><rect x="0.5" y="2.5" width="11" height="10" fill="#f6f6f6" stroke="#777" stroke-width="0.9"/><path d="M0.5 5.8H11.5M0.5 9.2H11.5M4.2 2.5V12.5M7.8 2.5V12.5" stroke="#9a9a9a" stroke-width="0.8"/><rect x="4.2" y="5.8" width="3.6" height="3.4" fill="#2f5ea8"/></svg>
<div class="t r" style="left:743.80px;top:58.05px;width:56.20px;height:11.28px;line-height:11.28px;font-size:9.4px;text-align:left;color:#444;">Einfügen</div>
<div class="t r" style="left:743.80px;top:76.55px;width:56.20px;height:11.28px;line-height:11.28px;font-size:9.4px;text-align:left;color:#444;">Löschen</div>
<div class="t r" style="left:743.80px;top:94.55px;width:56.20px;height:11.28px;line-height:11.28px;font-size:9.4px;text-align:left;color:#444;">Format</div>
<svg style="position:absolute;left:788.5px;top:62.5px;overflow:visible" width="5" height="3" viewBox="0 0 5 3"><polygon points="0,0 4.5,0 2.25,2.8" fill="#555"/></svg>
<svg style="position:absolute;left:786px;top:81.5px;overflow:visible" width="5" height="3" viewBox="0 0 5 3"><polygon points="0,0 4.5,0 2.25,2.8" fill="#555"/></svg>
<svg style="position:absolute;left:775.5px;top:99.5px;overflow:visible" width="5" height="3" viewBox="0 0 5 3"><polygon points="0,0 4.5,0 2.25,2.8" fill="#555"/></svg>
<svg style="position:absolute;left:806.5px;top:56.5px;overflow:visible" width="12" height="12" viewBox="0 0 12 12"><path d="M11.5 1.2H1.2L6.2 6L1.2 10.8H11.5" fill="none" stroke="#3a3a3a" stroke-width="1.6"/></svg>
<svg style="position:absolute;left:824px;top:61.5px;overflow:visible" width="5" height="3" viewBox="0 0 5 3"><polygon points="0,0 4.5,0 2.25,2.8" fill="#555"/></svg>
<svg style="position:absolute;left:807px;top:75px;overflow:visible" width="12" height="13" viewBox="0 0 12 13"><rect x="0.5" y="0.5" width="11" height="12" fill="#f8f8f8" stroke="#666" stroke-width="1"/><rect x="0.5" y="0.5" width="11" height="2" fill="#666"/><path d="M6 4V10M3.5 7.5L6 10.2L8.5 7.5" fill="none" stroke="#3f6aa0" stroke-width="1.6"/></svg>
<svg style="position:absolute;left:823px;top:81px;overflow:visible" width="5" height="3" viewBox="0 0 5 3"><polygon points="0,0 4.5,0 2.25,2.8" fill="#555"/></svg>
<svg style="position:absolute;left:807px;top:94px;overflow:visible" width="12" height="11" viewBox="0 0 12 11"><path d="M7.5 1L11 4.5L5 10.5L1.5 7Z" fill="#f0a6b2"/><path d="M1.5 7L5 10.5M3.8 4.7L7.3 8.2" stroke="#d96a7e" stroke-width="1"/></svg>
<svg style="position:absolute;left:823px;top:99px;overflow:visible" width="5" height="3" viewBox="0 0 5 3"><polygon points="0,0 4.5,0 2.25,2.8" fill="#555"/></svg>
<svg style="position:absolute;left:850px;top:59px;overflow:visible" width="25" height="22" viewBox="0 0 25 22"><text x="0.5" y="9" font-family="Liberation Sans" font-size="10.5" font-weight="bold" fill="#3e6fb0">A</text><text x="0.8" y="20.5" font-family="Liberation Sans" font-size="10.5" font-weight="bold" fill="#8867c6">Z</text><path d="M10.5 6.2H23.5L18.3 11.5V17.5H15.7V11.5Z" fill="#7a7a7a"/><path d="M13 7.5H21L17 11Z" fill="#a8a8a8"/></svg>
<div class="t r" style="left:826.00px;top:84.75px;width:71.00px;height:11.28px;line-height:11.28px;font-size:9.4px;text-align:center;color:#444;">Sortieren und</div>
<div class="t r" style="left:834.00px;top:97.55px;width:46.00px;height:11.28px;line-height:11.28px;font-size:9.4px;text-align:center;color:#444;">Filtern</div>
<svg style="position:absolute;left:874.5px;top:102.5px;overflow:visible" width="5" height="3" viewBox="0 0 5 3"><polygon points="0,0 4.5,0 2.25,2.8" fill="#555"/></svg>
<svg style="position:absolute;left:908px;top:57px;overflow:visible" width="24" height="24" viewBox="0 0 24 24"><circle cx="15" cy="8.5" r="6.3" fill="#f2f2f2" stroke="#4f7fae" stroke-width="2"/><path d="M10.5 13L3.5 20" stroke="#4f7fae" stroke-width="2.8" stroke-linecap="round"/></svg>
<div class="t r" style="left:890.00px;top:84.75px;width:60.00px;height:11.28px;line-height:11.28px;font-size:9.4px;text-align:center;color:#444;">Suchen und</div>
<div class="t r" style="left:890.00px;top:97.55px;width:54.00px;height:11.28px;line-height:11.28px;font-size:9.4px;text-align:center;color:#444;">Auswählen</div>
<svg style="position:absolute;left:942.5px;top:102.5px;overflow:visible" width="5" height="3" viewBox="0 0 5 3"><polygon points="0,0 4.5,0 2.25,2.8" fill="#555"/></svg>
<svg style="position:absolute;left:1008px;top:115.5px;overflow:visible" width="9" height="6" viewBox="0 0 9 6"><path d="M1 5L4.5 1.5L8 5" fill="none" stroke="#555" stroke-width="1.3"/></svg>
<svg style="position:absolute;left:75px;top:143px;overflow:visible" width="5" height="3" viewBox="0 0 5 3"><polygon points="0,0 4.5,0 2.25,2.8" fill="#555"/></svg>
<div style="left:97px;top:138.5px;width:1px;height:1px;background:#9a9a9a"></div>
<div style="left:97px;top:141.5px;width:1px;height:1px;background:#9a9a9a"></div>
<div style="left:97px;top:144.5px;width:1px;height:1px;background:#9a9a9a"></div>
<div style="left:97px;top:147.5px;width:1px;height:1px;background:#9a9a9a"></div>
<svg style="position:absolute;left:120px;top:140px;overflow:visible" width="8" height="8" viewBox="0 0 8 8"><path d="M0.5 0.5L7.5 7.5M7.5 0.5L0.5 7.5" stroke="#b8b8b8" stroke-width="1.4"/></svg>
<svg style="position:absolute;left:149px;top:140px;overflow:visible" width="9" height="8" viewBox="0 0 9 8"><path d="M0.5 4.5L3 7L8.5 0.8" fill="none" stroke="#b8b8b8" stroke-width="1.5"/></svg>
<div class="t r" style="left:170.00px;top:139.03px;width:25.00px;height:12.6px;line-height:12.6px;font-size:10.5px;text-align:center;color:#555;font-family:'Liberation Serif',serif;"><i>f</i><span style="font-size:7px"><i>x</i></span></div>
<svg style="position:absolute;left:1009px;top:141px;overflow:visible" width="9" height="6" viewBox="0 0 9 6"><path d="M1 1L4.5 4.5L8 1" fill="none" stroke="#555" stroke-width="1.3"/></svg>
<div style="left:1022.5px;top:51.5px;width:1.5px;height:602px;background:#e4e4e4;"></div>
<div style="left:1022.5px;top:0px;width:1.5px;height:51.5px;background:#a9c7b1;"></div></body></html>
